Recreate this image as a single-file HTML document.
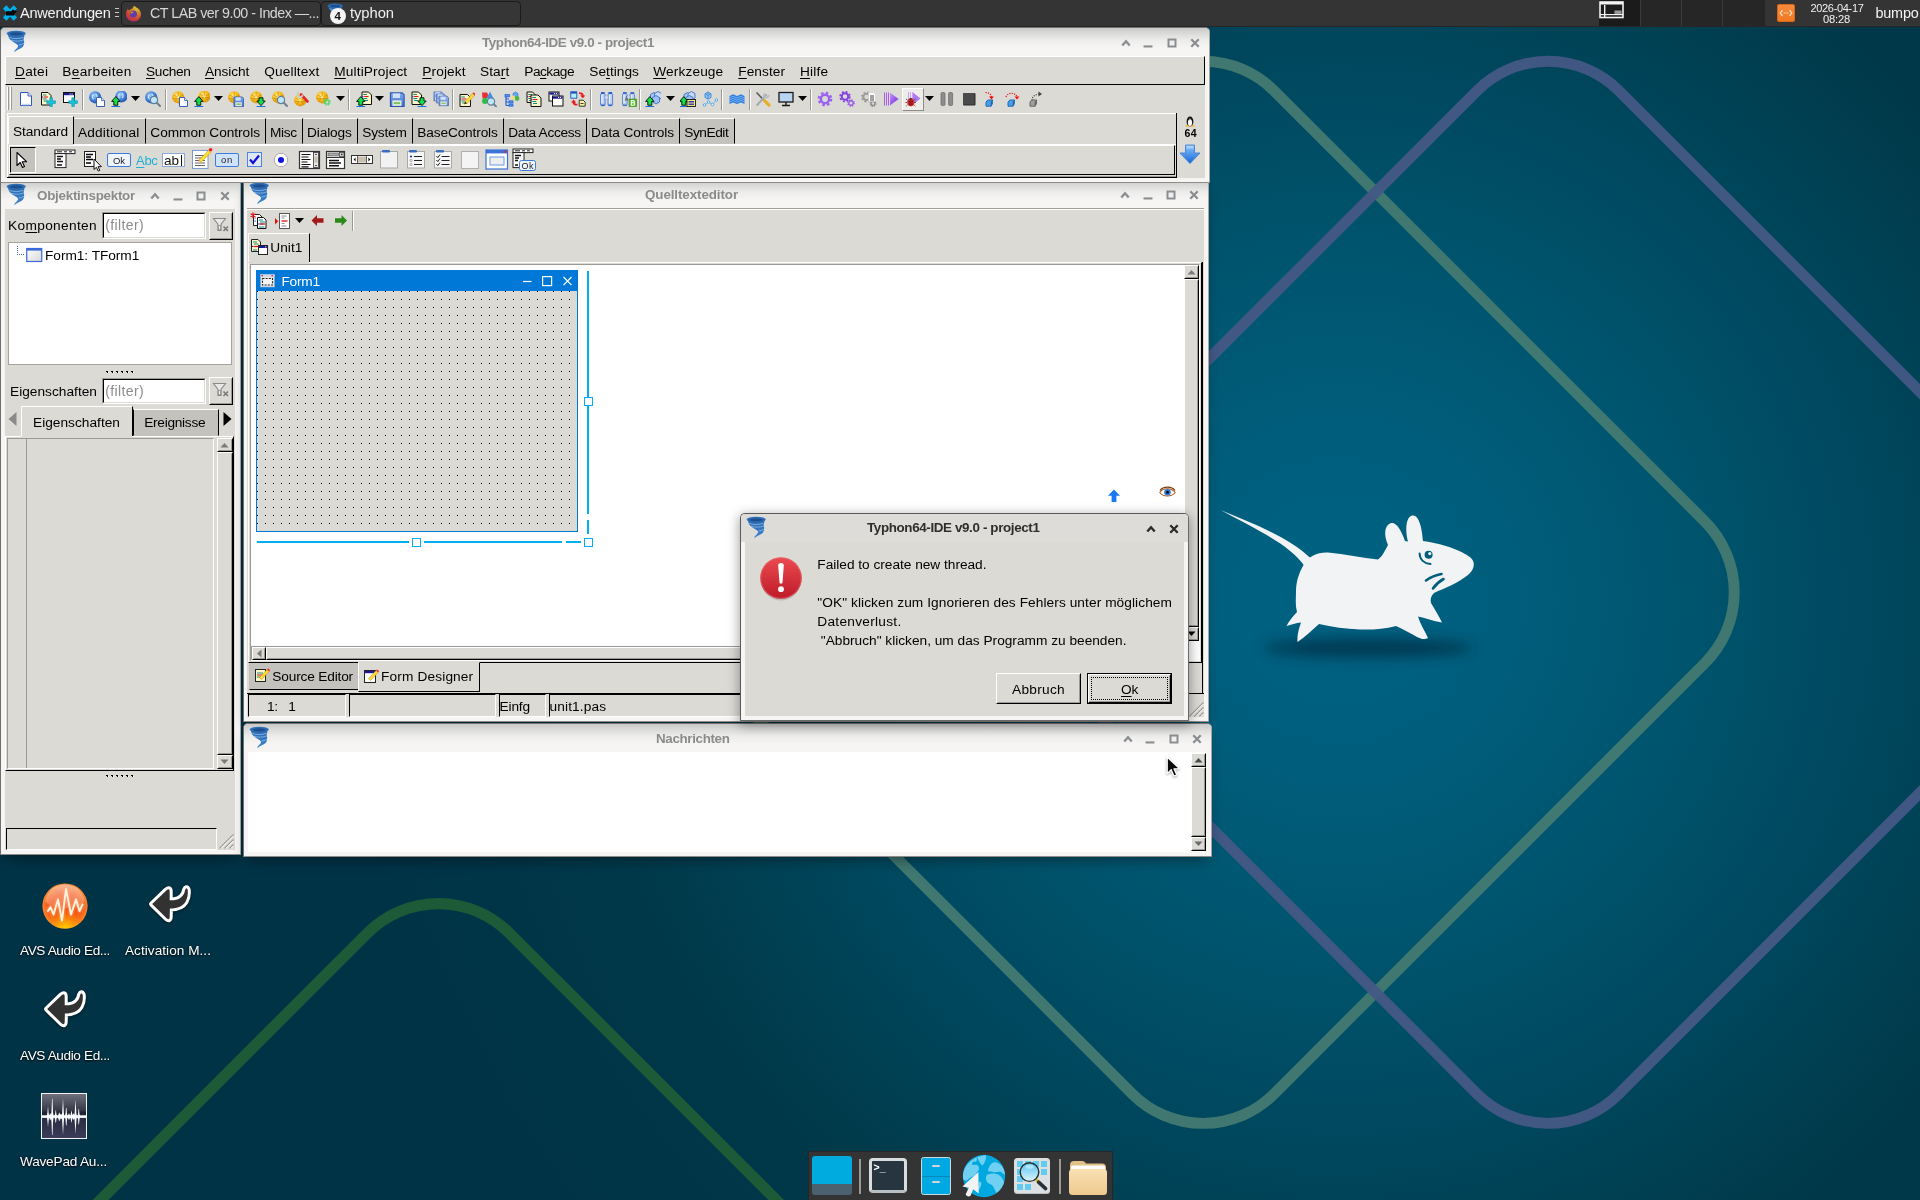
<!DOCTYPE html>
<html lang="de"><head><meta charset="utf-8"><title>Typhon64-IDE v9.0 - project1</title>
<style>
html,body{margin:0;padding:0;}
body{width:1920px;height:1200px;overflow:hidden;position:relative;background:#003f55;font-family:"Liberation Sans","DejaVu Sans",sans-serif;}
div,span.t,svg.i{position:absolute;box-sizing:border-box;}
span.t{white-space:pre;line-height:1;}
#all{left:0;top:0;width:1920px;height:1200px;will-change:transform;}
u{text-decoration:underline;text-decoration-thickness:1px;text-underline-offset:1.5px;}
</style></head>
<body>
<div id="all">
<svg width="0" height="0" style="position:absolute"><defs>
<linearGradient id="tg" x1="0" y1="0" x2="0" y2="1"><stop offset="0" stop-color="#2a69b0"/><stop offset="1" stop-color="#3f86d0"/></linearGradient>

<radialGradient id="gbl" cx="0.4" cy="0.35" r="0.75"><stop offset="0" stop-color="#a8d0ff"/><stop offset="0.45" stop-color="#4a8ade"/><stop offset="0.85" stop-color="#2258b4"/><stop offset="1" stop-color="#1a438f"/></radialGradient><radialGradient id="ggo" cx="0.4" cy="0.35" r="0.75"><stop offset="0" stop-color="#ffe878"/><stop offset="0.45" stop-color="#f8bc1c"/><stop offset="0.85" stop-color="#e09a08"/><stop offset="1" stop-color="#a86c00"/></radialGradient><linearGradient id="gpu" x1="0" y1="0" x2="1" y2="1"><stop offset="0" stop-color="#c79bff"/><stop offset="1" stop-color="#6a1fd0"/></linearGradient><linearGradient id="gfl" x1="0" y1="0" x2="0" y2="1"><stop offset="0" stop-color="#7fa8ee"/><stop offset="1" stop-color="#3f6fd0"/></linearGradient></defs></svg>
<svg class="i" style="left:0;top:0" width="1920" height="1200" viewBox="0 0 1920 1200"><defs><radialGradient id="wbg" gradientUnits="userSpaceOnUse" cx="1340" cy="600" r="1000"><stop offset="0" stop-color="#006181"/><stop offset="0.1" stop-color="#006080"/><stop offset="0.2" stop-color="#005c79"/><stop offset="0.3" stop-color="#005772"/><stop offset="0.4" stop-color="#00516a"/><stop offset="0.55" stop-color="#00475d"/><stop offset="0.65" stop-color="#004053"/><stop offset="0.75" stop-color="#00394a"/><stop offset="0.9" stop-color="#003447"/><stop offset="1" stop-color="#003346"/></radialGradient><filter id="blur6" x="-20%" y="-100%" width="140%" height="300%"><feGaussianBlur stdDeviation="7"/></filter></defs><rect width="1920" height="1200" fill="url(#wbg)"/><g fill="none"><rect x="33.6" y="1029.8" width="809.6" height="809.6" rx="100" transform="rotate(45 438.4 1434.6)" stroke="#1c5a38" stroke-width="11.2" stroke-opacity="1"/><rect x="798.4" y="187.5" width="809.6" height="809.6" rx="100" transform="rotate(45 1203.2 592.3)" stroke="#427a72" stroke-width="10.9" stroke-opacity="0.97"/><rect x="1143.2" y="187.5" width="809.6" height="809.6" rx="100" transform="rotate(45 1548 592.3)" stroke="#445885" stroke-width="10.9" stroke-opacity="0.96"/></g><ellipse cx="1368" cy="648" rx="105" ry="9" fill="#002c40" opacity="0.75" filter="url(#blur6)"/><g fill="#f2f3f5"><path d="M1220.4 510 C1255 524 1290 538 1310.5 558 L1304.5 566 C1290 545 1258 530 1220.4 510Z"/>
<path d="M1303 566 C1308 556 1318 552 1328 552.5 C1345 554 1362 558 1378 559.5 C1383 556 1385 550 1388 545 C1384 536 1384 526 1390 523.5 C1396 521 1401 530 1405 541 L1408 541.5 C1405 530 1406 517 1412 515.5 C1419 514 1422 528 1423 541 C1440 543 1462 550 1471 558 C1476 563 1474 570 1468 575 C1458 583 1445 588 1434 593 C1431 596 1430 599 1431 603 C1435 610 1439 616 1442 622.5 C1433 621 1425 618 1418 616.5 C1420 624 1425 631 1428 638 C1425 640 1421 639 1417 637 C1410 633 1403 629 1396 626 C1384 629 1372 630 1360 629.5 C1346 629 1332 627 1319 624 C1312 630 1305 637 1297.5 642 C1297 635 1299 628 1301 622.5 C1296 623 1291 625 1286.5 626 C1289 621 1293 616 1297 612 C1295 605 1296 598 1296 591.5 C1296 582 1299 573 1303 566Z"/></g>
<g fill="none" stroke="#005e7c" stroke-width="2" stroke-linecap="round"><circle cx="1428.6" cy="554.8" r="4" fill="#005e7c" stroke="none"/><circle cx="1429.8" cy="553.6" r="1.6" fill="#f2f3f5" stroke="none"/>
<path d="M1419.6 553.5 C1419.8 559.5 1424 563.5 1430.5 564"/><path d="M1426 580.5 C1431 577 1436 575 1441.5 574" stroke-width="2.6"/><path d="M1433 588.5 C1436 584 1440 581 1443.5 579" stroke-width="2.6"/></g></svg>
<div style="left:0px;top:0px;width:1920px;height:27px;background:#343434;border-bottom:1px solid #262626;"></div>
<svg class="i" style="left:2px;top:4px;" width="17" height="18" viewBox="0 0 17 18"><path d="M2.7 2.9 L13.3 15.1 M13.3 2.9 L2.7 15.1" stroke="#00b0e8" stroke-width="4.7" fill="none"/><path d="M4 7.2 L9.6 7.2 L10.2 5.8 L11.6 5.6 L12 6.6 L13.6 6.4 L14.6 7.4 L14 8.6 L12.8 9 L12.4 11.4 L4 11.4Z" fill="#050505"/></svg>
<span id="t1" class="t" style="left:20px;top:6px;font-size:14.6px;color:#f4f4f4;letter-spacing:-0.257px;">Anwendungen</span>
<div style="left:115px;top:8px;width:4px;height:1px;background:#c8c8c8;"></div>
<div style="left:115px;top:12px;width:4px;height:1px;background:#c8c8c8;"></div>
<div style="left:115px;top:16px;width:4px;height:1px;background:#c8c8c8;"></div>
<div style="left:121px;top:1px;width:200px;height:25px;background:#363636;border:1px solid #1b1b1b;border-radius:4px;"></div>
<div style="left:321px;top:1px;width:200px;height:25px;background:#363636;border:1px solid #1b1b1b;border-radius:4px;"></div>
<div style="left:125px;top:5px;width:17px;height:17px;opacity:0.8">
<svg class="i" style="left:0px;top:0px" width="17" height="17" viewBox="0 0 17 17"><defs><radialGradient id="ffg" cx="0.7" cy="0.15" r="1"><stop offset="0" stop-color="#ffe03a"/><stop offset="0.35" stop-color="#ff9a1f"/><stop offset="0.7" stop-color="#f0433a"/><stop offset="1" stop-color="#d61a78"/></radialGradient></defs><path d="M8.6 1.2 C9.8 0.4 10.4 1.8 11.4 2.6 C13.6 3.4 16 6 16 9.4 C16 13.6 12.6 16.4 8.6 16.4 C4.4 16.4 1 13.4 1 9.2 C1 7 1.8 5 3 3.8 C3.2 4.8 3.6 5.2 4.2 5.6 C5 4.4 6.4 3.8 7.4 3.8 C7.6 2.8 8 1.8 8.6 1.2Z" fill="url(#ffg)"/><circle cx="8.4" cy="9" r="3.6" fill="#6a3fc4"/><path d="M5.4 7.2 C6.6 6.2 8.2 6.6 9 7.4 C8 7.4 7.2 8 6.8 8.8 C6 8.6 5.4 8 5.4 7.2Z" fill="#ff9a1f"/></svg>
</div>
<span id="t2" class="t" style="left:150px;top:6px;font-size:14.3px;color:#d6d6d6;letter-spacing:-0.511px;">CT LAB ver 9.00 - Index —...</span>
<svg class="i" style="left:327px;top:3px" width="17.6" height="19.200000000000003" viewBox="0 0 22 24"><ellipse cx="10.2" cy="3.6" rx="9.6" ry="2.9" fill="#2d6db5"/><ellipse cx="10.2" cy="3.9" rx="6.5" ry="1.6" fill="#1d4f8f"/><path d="M2 4.5 C2.5 8 4 10 8 12.5 C11.5 14.5 13 15.5 11.5 17.5 C10.5 19 8.5 19.5 8.3 22.3 C10 20.3 13.5 19.6 16 17.6 C18.8 15.2 18.4 11.5 17.6 9 C18.2 7 18.5 5.6 18.4 4.5 C14 6.6 6.2 6.6 2 4.5Z" fill="url(#tg)"/><path d="M3.2 7.3 C7 9 13 9 17.6 7.2 M5 10.2 C9 11.6 14 11.4 17.9 10 M12.6 15 C14.5 14.8 16.6 14.2 18 13.2" stroke="#a9cdf0" stroke-width="0.8" fill="none" opacity="0.8"/></svg>
<div style="left:330px;top:8px;width:16px;height:16px;background:#f4f4f4;border-radius:8px;"></div>
<span id="t3" class="t" style="left:334.6px;top:11px;font-size:11.5px;color:#111;font-weight:bold;">4</span>
<span id="t4" class="t" style="left:350px;top:6px;font-size:14.8px;color:#f0f0f0;letter-spacing:-0.073px;">typhon</span>
<div style="left:1599px;top:0px;width:166px;height:26px;background:#262626;"></div>
<div style="left:1599px;top:0px;width:41px;height:26px;background:#1b1b1b;"></div>
<div style="left:1640px;top:0px;width:1px;height:26px;background:#3a3a3a;"></div>
<div style="left:1681px;top:0px;width:1px;height:26px;background:#3a3a3a;"></div>
<div style="left:1722px;top:0px;width:1px;height:26px;background:#3a3a3a;"></div>
<svg class="i" style="left:1599px;top:1px;" width="26" height="18" viewBox="0 0 26 18"><rect x="1" y="1" width="23" height="15.5" fill="none" stroke="#f2f2f2" stroke-width="1.6"/><rect x="1" y="1" width="23" height="2.5" fill="#f2f2f2"/><rect x="5" y="4" width="1.4" height="12" fill="#f2f2f2"/><rect x="1" y="13" width="23" height="1.2" fill="#f2f2f2"/><rect x="15.5" y="9.5" width="7" height="3.4" fill="#9a9a9a"/></svg>
<div style="left:1777px;top:4px;width:18px;height:18px;background:linear-gradient(#f58a3c,#ee7a22);border:1px solid #d9691a;border-radius:1.5px;"></div>
<svg class="i" style="left:1779px;top:9px;" width="14" height="8" viewBox="0 0 14 8"><path d="M3.5 1.2 L1.2 4 L3.5 6.8 M10.5 1.2 L12.8 4 L10.5 6.8" fill="none" stroke="#ffe4cf" stroke-width="1.2"/><path d="M4.6 4h1.2M6.4 4h1.2M8.2 4h1.2" stroke="#ffe4cf" stroke-width="1.2"/></svg>
<span id="t5" class="t" style="left:1810.5px;top:3px;font-size:11px;color:#f0f0f0;letter-spacing:-0.328px;">2026-04-17</span>
<span id="t6" class="t" style="left:1823px;top:14px;font-size:11.2px;color:#f0f0f0;letter-spacing:-0.200px;">08:28</span>
<span id="t7" class="t" style="left:1875.5px;top:6px;font-size:14.4px;color:#f4f4f4;letter-spacing:-0.203px;">bumpo</span>
<svg class="i" style="left:41px;top:882px;" width="48" height="48" viewBox="0 0 48 48"><defs><radialGradient id="avs" cx="0.5" cy="0.5" r="0.5"><stop offset="0" stop-color="#ee3a12"/><stop offset="0.6" stop-color="#f04c18"/><stop offset="0.88" stop-color="#f66a22"/><stop offset="1" stop-color="#f98a30"/></radialGradient><radialGradient id="avs2" cx="0.5" cy="1.02" r="0.52"><stop offset="0" stop-color="#ffd800"/><stop offset="0.35" stop-color="#ffb000" stop-opacity="0.8"/><stop offset="1" stop-color="#ff8000" stop-opacity="0"/></radialGradient><linearGradient id="avs3" x1="0" y1="0" x2="0" y2="1"><stop offset="0" stop-color="#ffe8d8" stop-opacity="0.6"/><stop offset="1" stop-color="#ffc8a8" stop-opacity="0.3"/></linearGradient><filter id="avsb" x="-30%" y="-30%" width="160%" height="160%"><feGaussianBlur stdDeviation="0.9"/></filter></defs><circle cx="24" cy="24" r="22.6" fill="url(#avs)"/><circle cx="24" cy="24" r="22.6" fill="url(#avs2)"/><path d="M4.2 19 C6 8 15 2.6 24 2.6 C33 2.6 42 8 43.8 19 C40 24.5 32 26 24 26 C16 26 8 24.5 4.2 19Z" fill="url(#avs3)"/><path d="M7 29 L9.5 25 L12.5 32.5 L17 17.5 L21 38.5 L25 7 L30 32.5 L35 17.5 L38.5 29 L41.5 22.5" fill="none" stroke="#ffb070" stroke-width="3.6" stroke-linejoin="round" stroke-linecap="round" opacity="0.6" filter="url(#avsb)"/><path d="M7 29 L9.5 25 L12.5 32.5 L17 17.5 L21 38.5 L25 7 L30 32.5 L35 17.5 L38.5 29 L41.5 22.5" fill="none" stroke="#fff2dc" stroke-width="1.9" stroke-linejoin="round" stroke-linecap="round"/></svg>
<span id="t8" class="t" style="left:20px;top:944px;font-size:13.6px;color:#ffffff;letter-spacing:-0.382px;text-shadow:0 1px 2px rgba(0,0,0,0.85),0 0 2px rgba(0,0,0,0.6);">AVS Audio Ed...</span>
<svg class="i" style="left:147px;top:883px;filter:drop-shadow(0 1px 1.5px rgba(0,0,0,0.5));" width="48" height="44" viewBox="0 0 48 44"><path d="M5.2 21.1 L19.6 7.2 Q22.7 4.6 22.7 8.6 L22.7 17.3 L27 17.2 C33 16.6 37.4 12.4 38 7.2 Q39.4 3.6 40.7 6.8 C41.2 11 40.6 15 38.5 18.7 C36 23 31 25.4 22.9 25.6 L22.7 33.8 Q22.7 37.8 19.6 35.2 Z" fill="#323232" stroke="#ffffff" stroke-width="6" stroke-linejoin="round" paint-order="stroke"/></svg>
<span id="t9" class="t" style="left:125px;top:944px;font-size:13.6px;color:#ffffff;letter-spacing:0.042px;text-shadow:0 1px 2px rgba(0,0,0,0.85),0 0 2px rgba(0,0,0,0.6);">Activation M...</span>
<svg class="i" style="left:42px;top:988px;filter:drop-shadow(0 1px 1.5px rgba(0,0,0,0.5));" width="48" height="44" viewBox="0 0 48 44"><path d="M5.2 21.1 L19.6 7.2 Q22.7 4.6 22.7 8.6 L22.7 17.3 L27 17.2 C33 16.6 37.4 12.4 38 7.2 Q39.4 3.6 40.7 6.8 C41.2 11 40.6 15 38.5 18.7 C36 23 31 25.4 22.9 25.6 L22.7 33.8 Q22.7 37.8 19.6 35.2 Z" fill="#323232" stroke="#ffffff" stroke-width="6" stroke-linejoin="round" paint-order="stroke"/></svg>
<span id="t10" class="t" style="left:20px;top:1049px;font-size:13.6px;color:#ffffff;letter-spacing:-0.382px;text-shadow:0 1px 2px rgba(0,0,0,0.85),0 0 2px rgba(0,0,0,0.6);">AVS Audio Ed...</span>
<svg class="i" style="left:41px;top:1093px;" width="46" height="46" viewBox="0 0 46 46"><defs><linearGradient id="wp" x1="0" y1="0" x2="0" y2="1"><stop offset="0" stop-color="#6f727d"/><stop offset="0.36" stop-color="#3a3c4a"/><stop offset="0.42" stop-color="#20222f"/><stop offset="0.55" stop-color="#2b2d42"/><stop offset="1" stop-color="#3b3d5a"/></linearGradient></defs><rect x="0.5" y="0.5" width="45" height="45" fill="url(#wp)" stroke="#f4f4f4" stroke-width="1"/><path d="M1.0 22.5 L1.5 22.5 L2.0 22.5 L2.5 22.5 L3.0 22.5 L3.5 22.5 L4.0 22.5 L4.5 22.5 L5.0 22.5 L5.5 22.5 L6.0 22.2 L6.5 18.6 L7.0 13.5 L7.5 18.6 L8.0 22.2 L8.5 22.1 L9.0 19.9 L9.5 20.4 L10.0 22.0 L10.5 18.3 L11.0 5.7 L11.5 5.7 L12.0 18.3 L12.5 22.2 L13.0 22.5 L13.5 22.5 L14.0 21.6 L14.5 17.6 L15.0 17.6 L15.5 21.6 L16.0 22.5 L16.5 22.5 L17.0 22.4 L17.5 21.4 L18.0 19.4 L18.5 19.4 L19.0 21.4 L19.5 21.6 L20.0 20.5 L20.5 21.7 L21.0 21.4 L21.5 14.0 L22.0 5.5 L22.5 14.0 L23.0 21.4 L23.5 22.5 L24.0 22.4 L24.5 20.6 L25.0 14.9 L25.5 14.9 L26.0 20.6 L26.5 22.4 L27.0 22.3 L27.5 21.3 L28.0 20.0 L28.5 21.3 L29.0 22.3 L29.5 22.2 L30.0 19.8 L30.5 17.0 L31.0 19.8 L31.5 22.1 L32.0 21.6 L32.5 20.0 L33.0 21.5 L33.5 21.5 L34.0 14.5 L34.5 6.5 L35.0 14.5 L35.5 21.5 L36.0 22.5 L36.5 22.5 L37.0 21.3 L37.5 16.0 L38.0 16.0 L38.5 21.3 L39.0 22.5 L39.5 22.5 L40.0 22.5 L40.5 22.5 L41.0 22.5 L41.5 22.5 L42.0 22.5 L42.5 22.5 L43.0 22.5 L43.5 22.5 L44.0 22.5 L44.5 22.5 L45.0 22.5 L45.0 24.7 L44.5 24.7 L44.0 24.7 L43.5 24.7 L43.0 24.7 L42.5 24.7 L42.0 24.7 L41.5 24.7 L41.0 24.7 L40.5 24.7 L40.0 24.7 L39.5 24.7 L39.0 24.8 L38.5 26.0 L38.0 31.4 L37.5 31.4 L37.0 26.0 L36.5 24.8 L36.0 24.8 L35.5 25.7 L35.0 32.9 L34.5 41.0 L34.0 32.9 L33.5 25.8 L33.0 25.7 L32.5 27.3 L32.0 25.7 L31.5 25.1 L31.0 27.5 L30.5 30.3 L30.0 27.5 L29.5 25.1 L29.0 24.9 L28.5 26.0 L28.0 27.3 L27.5 26.0 L27.0 24.9 L26.5 24.8 L26.0 26.6 L25.5 32.4 L25.0 32.4 L24.5 26.6 L24.0 24.8 L23.5 24.8 L23.0 25.8 L22.5 33.4 L22.0 42.1 L21.5 33.4 L21.0 25.8 L20.5 25.5 L20.0 26.8 L19.5 25.6 L19.0 25.9 L18.5 27.9 L18.0 27.9 L17.5 25.9 L17.0 24.9 L16.5 24.7 L16.0 24.8 L15.5 25.7 L15.0 29.7 L14.5 29.7 L14.0 25.7 L13.5 24.8 L13.0 24.7 L12.5 25.0 L12.0 29.0 L11.5 41.9 L11.0 41.9 L10.5 29.0 L10.0 25.2 L9.5 26.9 L9.0 27.3 L8.5 25.2 L8.0 25.1 L7.5 28.7 L7.0 33.9 L6.5 28.7 L6.0 25.1 L5.5 24.7 L5.0 24.7 L4.5 24.7 L4.0 24.7 L3.5 24.7 L3.0 24.7 L2.5 24.7 L2.0 24.7 L1.5 24.7 L1.0 24.7Z" fill="#fbfcff"/><rect x="1" y="22.6" width="44" height="2" fill="#fbfcff"/></svg>
<span id="t11" class="t" style="left:20px;top:1155px;font-size:13.6px;color:#ffffff;letter-spacing:-0.186px;text-shadow:0 1px 2px rgba(0,0,0,0.85),0 0 2px rgba(0,0,0,0.6);">WavePad Au...</span>
<div style="left:808px;top:1151px;width:305px;height:50px;background:#343434;border:1px solid #262626;"></div>
<div style="left:812px;top:1156px;width:40px;height:39px;background:linear-gradient(#00abe0 0,#00abe0 73%,#4b6170 73%);border-radius:3px;"></div>
<div style="left:859px;top:1159px;width:2px;height:35px;background:#9c9a98;"></div>
<div style="left:869px;top:1158px;width:38px;height:35px;background:#263540;border:3px solid #d8dde0;border-bottom-color:#b8c0c6;border-radius:4px;"></div>
<span id="t12" class="t" style="left:873.5px;top:1162px;font-size:10.5px;color:#ffffff;font-weight:bold;font-family:"Liberation Mono","DejaVu Sans Mono",monospace;">&gt;_</span>
<div style="left:921px;top:1157px;width:30px;height:38px;background:#00a9e2;border:1.5px solid #cfd8dc;border-radius:2.5px;"></div>
<div style="left:922px;top:1175.5px;width:28px;height:1.2px;background:#0086b8;"></div>
<div style="left:932px;top:1165px;width:8px;height:2px;background:#d0d6da;border-radius:1px;"></div>
<div style="left:932px;top:1181px;width:8px;height:2px;background:#d0d6da;border-radius:1px;"></div>
<svg class="i" style="left:962px;top:1154px;" width="44" height="44" viewBox="0 0 44 44"><defs><clipPath id="gcl"><circle cx="22" cy="22" r="21.2"/></clipPath></defs><circle cx="22" cy="22" r="21.2" fill="#00a8e0"/><g clip-path="url(#gcl)" fill="#6fd0f1"><path d="M14.5 3.5 C11 5 7 8 4 12 C1.5 16 0.5 20 1 25 L4 27 L8 24 L13 21 L16 17 C18 15 17 12 15 11 C13 10 11 12 10 10 C10 8 12 7 14 8 C15 6 15 5 14.5 3.5Z"/><path d="M15 3 L24 1 C24.5 5 22 11 20 11.5 C18 9 16 6 15 3Z"/><path d="M30 9 C33 7 37 9 40 12 C42 15 43 18 43 21 L39 18 C37 17 34 19 31 18 C29 17 27 18 26 17 C26 14 28 11 30 9Z"/><path d="M25 21 C28 19 33 19 37 21 C40 23 42 27 42.5 30 C41 35 38 38 35 40 C33 37 32 33 30 31 C27 30 24 28 24 25 C24 23 24 22 25 21Z"/><path d="M17 28 C19 27 20 29 19 32 C18 34 17 36 16 36 Z"/></g><path d="M16.4 17.9 L0.4 32.4 L6.8 33.8 L3.7 40.3 C4 42 6.5 43.2 8.4 42 L11.2 35.2 L16.7 39.5Z" fill="#f3f3f4"/></svg>
<div style="left:1014px;top:1158px;width:36px;height:36px;background:#dde0e3;border-radius:3.5px;border-bottom:1.5px solid #b9bec3;"></div>
<div style="left:1017px;top:1161.0px;width:6px;height:6px;background:#62ccf0;"></div>
<div style="left:1025px;top:1161.0px;width:6px;height:6px;background:#62ccf0;"></div>
<div style="left:1033px;top:1161.0px;width:6px;height:6px;background:#62ccf0;"></div>
<div style="left:1041px;top:1161.0px;width:6px;height:6px;background:#62ccf0;"></div>
<div style="left:1017px;top:1168.6px;width:6px;height:6px;background:#62ccf0;"></div>
<div style="left:1025px;top:1168.6px;width:6px;height:6px;background:#62ccf0;"></div>
<div style="left:1033px;top:1168.6px;width:6px;height:6px;background:#62ccf0;"></div>
<div style="left:1041px;top:1168.6px;width:6px;height:6px;background:#62ccf0;"></div>
<div style="left:1017px;top:1176.2px;width:6px;height:6px;background:#62ccf0;"></div>
<div style="left:1017px;top:1183.8px;width:6px;height:6px;background:#62ccf0;"></div>
<div style="left:1025px;top:1183.8px;width:6px;height:6px;background:#62ccf0;"></div>
<svg class="i" style="left:1014px;top:1158px;" width="38" height="38" viewBox="0 0 38 38"><defs><linearGradient id="lens" x1="0" y1="0" x2="0" y2="1"><stop offset="0" stop-color="#55c6f2"/><stop offset="1" stop-color="#dff4fc"/></linearGradient></defs><path d="M22.4 21.8 L25 24.6" stroke="#e8b818" stroke-width="3.4"/><path d="M24.6 24.2 L31.6 30.6" stroke="#263238" stroke-width="3.6" stroke-linecap="round"/><circle cx="15.5" cy="14.1" r="9.3" fill="url(#lens)" stroke="#263238" stroke-width="1.4"/><ellipse cx="15.5" cy="8.8" rx="4.2" ry="2" fill="#c8eefc" opacity="0.7"/></svg>
<div style="left:1059px;top:1159px;width:2px;height:35px;background:#9c9a98;"></div>
<svg class="i" style="left:1068px;top:1159px;" width="40" height="37" viewBox="0 0 40 37"><defs><linearGradient id="fo" x1="0" y1="0" x2="0" y2="1"><stop offset="0" stop-color="#f9e0b2"/><stop offset="1" stop-color="#eec98f"/></linearGradient></defs><path d="M2 6 C2 3.5 3.5 2 6 2 L14 2 C16 2 17 3 18 4.5 L34 4.5 C36.5 4.5 38 6 38 8.5 L38 14 L2 14Z" fill="#e2c08a"/><rect x="3" y="6.5" width="34" height="8" rx="1.5" fill="#fbfbfb"/><rect x="1" y="10" width="38" height="26" rx="3.5" fill="url(#fo)"/></svg>
<div style="left:0px;top:180px;width:241px;height:675px;background:#f6f5f4;border:1px solid;border-color:#757370 #aaa6a2 #8f8c89 #6e6e6e;border-radius:5px 5px 1px 1px;box-shadow:0 7px 13px -4px rgba(0,0,0,0.42);"></div>
<div style="left:1px;top:181px;width:239px;height:28px;background:linear-gradient(to bottom,#c9c9c9 0px,#dcdcdb 6px,#ececeb 12px,#f6f5f4 20px);border-radius:4px 4px 0 0;"></div>
<svg class="i" style="left:6px;top:183px" width="22.0" height="24.0" viewBox="0 0 22 24"><ellipse cx="10.2" cy="3.6" rx="9.6" ry="2.9" fill="#2d6db5"/><ellipse cx="10.2" cy="3.9" rx="6.5" ry="1.6" fill="#1d4f8f"/><path d="M2 4.5 C2.5 8 4 10 8 12.5 C11.5 14.5 13 15.5 11.5 17.5 C10.5 19 8.5 19.5 8.3 22.3 C10 20.3 13.5 19.6 16 17.6 C18.8 15.2 18.4 11.5 17.6 9 C18.2 7 18.5 5.6 18.4 4.5 C14 6.6 6.2 6.6 2 4.5Z" fill="url(#tg)"/><path d="M3.2 7.3 C7 9 13 9 17.6 7.2 M5 10.2 C9 11.6 14 11.4 17.9 10 M12.6 15 C14.5 14.8 16.6 14.2 18 13.2" stroke="#a9cdf0" stroke-width="0.8" fill="none" opacity="0.8"/></svg>
<span id="t13" class="t" style="left:37px;top:189px;font-size:13.4px;color:#8b8b8b;font-weight:bold;letter-spacing:-0.264px;">Objektinspektor</span>
<svg class="i" style="left:147px;top:187.5px" width="16" height="16" viewBox="-8 -8 16 16"><path d="M-3.7 2.6 L0 -1.7 L3.7 2.6" fill="none" stroke="#8b8e90" stroke-width="2.3"/></svg>
<svg class="i" style="left:170px;top:187.5px" width="16" height="16" viewBox="-8 -8 16 16"><rect x="-4.5" y="2.4" width="9" height="2.1" fill="#8b8e90"/></svg>
<svg class="i" style="left:193px;top:187.5px" width="16" height="16" viewBox="-8 -8 16 16"><rect x="-3.5" y="-3.5" width="7" height="7" fill="none" stroke="#8b8e90" stroke-width="2"/></svg>
<svg class="i" style="left:216.5px;top:187.5px" width="16" height="16" viewBox="-8 -8 16 16"><path d="M-3.7 -3.7 L3.7 3.7 M3.7 -3.7 L-3.7 3.7" fill="none" stroke="#8b8e90" stroke-width="2.3"/></svg>
<div style="left:5px;top:209px;width:230px;height:641px;background:#dcdad5;"></div>
<span id="t14" class="t" style="left:8px;top:219px;font-size:13.7px;color:#000;letter-spacing:0.341px;">Ko<u>m</u>ponenten</span>
<div style="left:102px;top:212px;width:104px;height:27px;background:#fff;border:1px solid;border-color:#9c9a94 #fff #fff #9c9a94;"></div>
<div style="left:103px;top:213px;width:102px;height:25px;border:1px solid;border-color:#000 #dcdad5 #dcdad5 #000;"></div>
<span id="t15" class="t" style="left:105.3px;top:218px;font-size:14px;color:#8c8c8c;letter-spacing:0.365px;">(filter)</span>
<div style="left:209px;top:212px;width:24px;height:28px;background:#dcdad5;border:1px solid;border-color:#fff #000 #000 #fff;"></div>
<div style="left:210px;top:213px;width:22px;height:26px;border:1px solid;border-color:transparent #9c9a94 #9c9a94 transparent;"></div>
<svg class="i" style="left:212px;top:217px" width="18" height="16" viewBox="0 0 18 16"><path d="M1.5 1.5h12l-4.4 5.6v6.4h-3.2v-6.4z" fill="#e8e8e8" stroke="#8a8a8a" stroke-width="1.1"/><rect x="6.4" y="8.6" width="2.2" height="4.2" fill="#f6f6f6" stroke="#8a8a8a" stroke-width="0.8"/><path d="M11.5 9.5l4.5 4.5M16 9.5l-4.5 4.5" stroke="#777" stroke-width="1.5"/></svg>
<div style="left:8px;top:242px;width:224px;height:123px;background:#fff;border:1px solid #a5a39c;"></div>
<div style="left:17px;top:246px;width:1px;height:1px;background:#4a6aa8;"></div>
<div style="left:17px;top:248px;width:1px;height:1px;background:#4a6aa8;"></div>
<div style="left:17px;top:250px;width:1px;height:1px;background:#4a6aa8;"></div>
<div style="left:17px;top:252px;width:1px;height:1px;background:#4a6aa8;"></div>
<div style="left:17px;top:254px;width:1px;height:1px;background:#4a6aa8;"></div>
<div style="left:19px;top:254px;width:1px;height:1px;background:#4a6aa8;"></div>
<div style="left:21px;top:254px;width:1px;height:1px;background:#4a6aa8;"></div>
<div style="left:23px;top:254px;width:1px;height:1px;background:#4a6aa8;"></div>
<svg class="i" style="left:26px;top:247px" width="17" height="16" viewBox="0 0 17 16"><defs><linearGradient id="fi" x1="0" y1="0" x2="1" y2="1"><stop offset="0" stop-color="#fff"/><stop offset="1" stop-color="#d8d8d8"/></linearGradient></defs><rect x="0.75" y="1.5" width="15" height="13" fill="url(#fi)" stroke="#3a6ad8" stroke-width="1.2"/><rect x="0.75" y="1.2" width="15" height="2.4" fill="#3a6ad8"/></svg>
<span id="t16" class="t" style="left:45px;top:249px;font-size:13.7px;color:#000;letter-spacing:-0.039px;">Form1: TForm1</span>
<div style="left:106px;top:371px;width:2px;height:1px;background:#000;"></div>
<div style="left:107px;top:372px;width:1px;height:1px;background:#000;"></div>
<div style="left:108px;top:372px;width:1px;height:1px;background:#fff;"></div>
<div style="left:111px;top:371px;width:2px;height:1px;background:#000;"></div>
<div style="left:112px;top:372px;width:1px;height:1px;background:#000;"></div>
<div style="left:113px;top:372px;width:1px;height:1px;background:#fff;"></div>
<div style="left:116px;top:371px;width:2px;height:1px;background:#000;"></div>
<div style="left:117px;top:372px;width:1px;height:1px;background:#000;"></div>
<div style="left:118px;top:372px;width:1px;height:1px;background:#fff;"></div>
<div style="left:121px;top:371px;width:2px;height:1px;background:#000;"></div>
<div style="left:122px;top:372px;width:1px;height:1px;background:#000;"></div>
<div style="left:123px;top:372px;width:1px;height:1px;background:#fff;"></div>
<div style="left:126px;top:371px;width:2px;height:1px;background:#000;"></div>
<div style="left:127px;top:372px;width:1px;height:1px;background:#000;"></div>
<div style="left:128px;top:372px;width:1px;height:1px;background:#fff;"></div>
<div style="left:131px;top:371px;width:2px;height:1px;background:#000;"></div>
<div style="left:132px;top:372px;width:1px;height:1px;background:#000;"></div>
<div style="left:133px;top:372px;width:1px;height:1px;background:#fff;"></div>
<span id="t17" class="t" style="left:10px;top:385px;font-size:13.7px;color:#000;letter-spacing:0.019px;">Eigenschaften</span>
<div style="left:102px;top:378px;width:104px;height:26px;background:#fff;border:1px solid;border-color:#9c9a94 #fff #fff #9c9a94;"></div>
<div style="left:103px;top:379px;width:102px;height:24px;border:1px solid;border-color:#000 #dcdad5 #dcdad5 #000;"></div>
<span id="t18" class="t" style="left:105.3px;top:384px;font-size:14px;color:#8c8c8c;letter-spacing:0.365px;">(filter)</span>
<div style="left:209px;top:377px;width:24px;height:28px;background:#dcdad5;border:1px solid;border-color:#fff #000 #000 #fff;"></div>
<div style="left:210px;top:378px;width:22px;height:26px;border:1px solid;border-color:transparent #9c9a94 #9c9a94 transparent;"></div>
<svg class="i" style="left:212px;top:382px" width="18" height="16" viewBox="0 0 18 16"><path d="M1.5 1.5h12l-4.4 5.6v6.4h-3.2v-6.4z" fill="#e8e8e8" stroke="#8a8a8a" stroke-width="1.1"/><rect x="6.4" y="8.6" width="2.2" height="4.2" fill="#f6f6f6" stroke="#8a8a8a" stroke-width="0.8"/><path d="M11.5 9.5l4.5 4.5M16 9.5l-4.5 4.5" stroke="#777" stroke-width="1.5"/></svg>
<svg class="i" style="left:8px;top:411px" width="9" height="16" viewBox="0 0 9 16"><path d="M8.5 1v14l-8-7z" fill="#8a8a8a"/></svg>
<svg class="i" style="left:223px;top:411px" width="9" height="16" viewBox="0 0 9 16"><path d="M0.5 1v14l8-7z" fill="#000"/></svg>
<div style="left:133px;top:409px;width:86px;height:27px;background:#c4c2bd;border:1px solid;border-color:#fff #000 transparent #000;"></div>
<div style="left:21px;top:406px;width:112px;height:31px;background:#dcdad5;border:1px solid;border-color:#fff #000 transparent #fff;"></div>
<span id="t19" class="t" style="left:33px;top:416px;font-size:13.7px;color:#000;letter-spacing:0.019px;">Eigenschaften</span>
<span id="t20" class="t" style="left:144.2px;top:416px;font-size:13.7px;color:#000;letter-spacing:-0.281px;">Ereignisse</span>
<div style="left:5px;top:436px;width:229px;height:335px;border:1px solid;border-color:#fff #000 #000 #fff;"></div>
<div style="left:21px;top:436px;width:111px;height:1px;background:#dcdad5;"></div>
<div style="left:7px;top:438px;width:207px;height:331px;background:#dcdad5;border:1px solid;border-color:#9c9a94 #fff #fff #9c9a94;"></div>
<div style="left:26px;top:439px;width:1px;height:329px;background:#9c9a94;"></div>
<div style="left:217px;top:438px;width:16px;height:331px;background:#c4c2bd;border:1px solid;border-color:#9c9a94 #fff #fff #9c9a94;"></div>
<div style="left:217px;top:438px;width:16px;height:14px;background:#dcdad5;border:1px solid;border-color:#fff #000 #000 #fff;"></div>
<div style="left:218px;top:439px;width:14px;height:12px;border:1px solid;border-color:transparent #9c9a94 #9c9a94 transparent;"></div>
<svg class="i" style="left:220px;top:442px" width="9" height="6" viewBox="0 0 9 6"><path d="M0.5 5.5l4-4.5 4 4.5z" fill="#7a7a7a"/></svg>
<div style="left:217px;top:755px;width:16px;height:14px;background:#dcdad5;border:1px solid;border-color:#fff #000 #000 #fff;"></div>
<div style="left:218px;top:756px;width:14px;height:12px;border:1px solid;border-color:transparent #9c9a94 #9c9a94 transparent;"></div>
<svg class="i" style="left:220px;top:759px" width="9" height="6" viewBox="0 0 9 6"><path d="M0.5 0.5l4 4.5 4-4.5z" fill="#7a7a7a"/></svg>
<div style="left:217px;top:452px;width:16px;height:303px;background:#dcdad5;border:1px solid;border-color:#fff #000 #000 #fff;"></div>
<div style="left:218px;top:453px;width:14px;height:301px;border:1px solid;border-color:transparent #9c9a94 #9c9a94 transparent;"></div>
<div style="left:233px;top:437px;width:1px;height:333px;background:#000;"></div>
<div style="left:106px;top:775px;width:2px;height:1px;background:#000;"></div>
<div style="left:107px;top:776px;width:1px;height:1px;background:#000;"></div>
<div style="left:108px;top:776px;width:1px;height:1px;background:#fff;"></div>
<div style="left:111px;top:775px;width:2px;height:1px;background:#000;"></div>
<div style="left:112px;top:776px;width:1px;height:1px;background:#000;"></div>
<div style="left:113px;top:776px;width:1px;height:1px;background:#fff;"></div>
<div style="left:116px;top:775px;width:2px;height:1px;background:#000;"></div>
<div style="left:117px;top:776px;width:1px;height:1px;background:#000;"></div>
<div style="left:118px;top:776px;width:1px;height:1px;background:#fff;"></div>
<div style="left:121px;top:775px;width:2px;height:1px;background:#000;"></div>
<div style="left:122px;top:776px;width:1px;height:1px;background:#000;"></div>
<div style="left:123px;top:776px;width:1px;height:1px;background:#fff;"></div>
<div style="left:126px;top:775px;width:2px;height:1px;background:#000;"></div>
<div style="left:127px;top:776px;width:1px;height:1px;background:#000;"></div>
<div style="left:128px;top:776px;width:1px;height:1px;background:#fff;"></div>
<div style="left:131px;top:775px;width:2px;height:1px;background:#000;"></div>
<div style="left:132px;top:776px;width:1px;height:1px;background:#000;"></div>
<div style="left:133px;top:776px;width:1px;height:1px;background:#fff;"></div>
<div style="left:6px;top:828px;width:211px;height:22px;border:1px solid;border-color:#000 #fff #fff #000;"></div>
<svg class="i" style="left:218px;top:833px" width="16" height="16" viewBox="0 0 16 16"><path d="M15.5 1.5l-14 14M15.5 6.5l-9 9M15.5 11.5l-4 4" stroke="#9c9a94" stroke-width="1.2"/><path d="M15.5 2.8l-12.7 12.7M15.5 7.8l-7.7 7.7M15.5 12.8l-2.7 2.7" stroke="#fff" stroke-width="1"/></svg>
<div style="left:243px;top:179px;width:966px;height:543px;background:#f6f5f4;border:1px solid;border-color:#757370 #aaa6a2 #8f8c89 #6e6e6e;border-radius:5px 5px 1px 1px;box-shadow:0 7px 13px -4px rgba(0,0,0,0.42);"></div>
<div style="left:244px;top:180px;width:964px;height:28px;background:linear-gradient(to bottom,#c9c9c9 0px,#dcdcdb 6px,#ececeb 12px,#f6f5f4 20px);border-radius:4px 4px 0 0;"></div>
<svg class="i" style="left:249px;top:182px" width="22.0" height="24.0" viewBox="0 0 22 24"><ellipse cx="10.2" cy="3.6" rx="9.6" ry="2.9" fill="#2d6db5"/><ellipse cx="10.2" cy="3.9" rx="6.5" ry="1.6" fill="#1d4f8f"/><path d="M2 4.5 C2.5 8 4 10 8 12.5 C11.5 14.5 13 15.5 11.5 17.5 C10.5 19 8.5 19.5 8.3 22.3 C10 20.3 13.5 19.6 16 17.6 C18.8 15.2 18.4 11.5 17.6 9 C18.2 7 18.5 5.6 18.4 4.5 C14 6.6 6.2 6.6 2 4.5Z" fill="url(#tg)"/><path d="M3.2 7.3 C7 9 13 9 17.6 7.2 M5 10.2 C9 11.6 14 11.4 17.9 10 M12.6 15 C14.5 14.8 16.6 14.2 18 13.2" stroke="#a9cdf0" stroke-width="0.8" fill="none" opacity="0.8"/></svg>
<span id="t21" class="t" style="left:645px;top:188px;font-size:13.4px;color:#8b8b8b;font-weight:bold;letter-spacing:-0.100px;">Quelltexteditor</span>
<svg class="i" style="left:1116.5px;top:186.5px" width="16" height="16" viewBox="-8 -8 16 16"><path d="M-3.7 2.6 L0 -1.7 L3.7 2.6" fill="none" stroke="#8b8e90" stroke-width="2.3"/></svg>
<svg class="i" style="left:1139.5px;top:186.5px" width="16" height="16" viewBox="-8 -8 16 16"><rect x="-4.5" y="2.4" width="9" height="2.1" fill="#8b8e90"/></svg>
<svg class="i" style="left:1162.5px;top:186.5px" width="16" height="16" viewBox="-8 -8 16 16"><rect x="-3.5" y="-3.5" width="7" height="7" fill="none" stroke="#8b8e90" stroke-width="2"/></svg>
<svg class="i" style="left:1185.5px;top:186.5px" width="16" height="16" viewBox="-8 -8 16 16"><path d="M-3.7 -3.7 L3.7 3.7 M3.7 -3.7 L-3.7 3.7" fill="none" stroke="#8b8e90" stroke-width="2.3"/></svg>
<div style="left:247px;top:208px;width:957px;height:509px;background:#dcdad5;border-top:1px solid #a39e96;"></div>
<div style="left:247px;top:209px;width:957px;height:1px;background:#fff;"></div>
<svg class="i" style="left:250px;top:212px" width="18" height="18" viewBox="0 0 18 18"><path d="M3.500 2.500h6l2.500 2.500v8.500h-8.500z" fill="#fff" stroke="#222" stroke-width="1"/><path d="M4.500 6h1.200M4.500 9h1.200" stroke="#1a1ad0" stroke-width="1"/><path d="M7.500 5.500h6l2.500 2.500v8.500h-8.500z" fill="#fff" stroke="#111" stroke-width="1"/><path d="M9 8h4M10 10h5M9 12h4.500M9 15h5.500" stroke="#128a8a" stroke-width="1"/><path d="M10 12.500h5" stroke="#e01010" stroke-width="1.200" transform="translate(0 -0.500)"/><rect x="8.200" y="11.500" width="1.200" height="1" fill="#1a1ad0"/><path d="M3 0.500v5.500M0.600 1.800l4.800 2.900M5.400 1.800l-4.800 2.900" stroke="#e81818" stroke-width="1.300"/></svg>
<svg class="i" style="left:274px;top:212px" width="18" height="18" viewBox="0 0 18 18"><path d="M1 6v6.500l3.200-3.250z" fill="#e01010"/><rect x="5.500" y="1.500" width="10" height="15" fill="#fff" stroke="#555" stroke-width="1"/><path d="M7.500 4h5M7.500 14h5" stroke="#888" stroke-width="1"/><path d="M7.500 6h3M7.500 11.500h3" stroke="#999" stroke-width="1"/><path d="M7.500 9h6" stroke="#e01010" stroke-width="1.300"/></svg>
<svg class="i" style="left:295.0px;top:218.0px" width="9" height="5" viewBox="0 0 9 5"><path d="M0 0h9l-4.5 5z" fill="#000"/></svg>
<svg class="i" style="left:310px;top:213px" width="16" height="16" viewBox="0 0 16 16"><path d="M1.500 7.500l5.500-5.500v3.200h6.500v4.600h-6.500v3.200z" fill="#a31a1a"/></svg>
<svg class="i" style="left:333px;top:213px" width="16" height="16" viewBox="0 0 16 16"><path d="M14 7.500l-5.500-5.500v3.200h-6.500v4.600h6.500v3.200z" fill="#2a8a18"/></svg>
<div style="left:352px;top:211px;width:1px;height:20px;background:#9c9a94;"></div>
<div style="left:353px;top:211px;width:1px;height:20px;background:#fff;"></div>
<div style="left:248px;top:233px;width:62px;height:30px;background:#dcdad5;border:1px solid;border-color:#fff #000 transparent #fff;"></div>
<svg class="i" style="left:251px;top:239px" width="18" height="18" viewBox="0 0 18 18"><path d="M0.500 0.500h6.500l2.500 2.500v9.500h-9z" fill="#fbf6c8" stroke="#222" stroke-width="1"/><path d="M2 3h4M3 5h4.500M2 11h4" stroke="#128a8a" stroke-width="1"/><path d="M2.500 8h5" stroke="#e01010" stroke-width="1.200" transform="translate(0 -0.500)"/><rect x="1" y="7" width="1.200" height="1" fill="#1a1ad0"/><rect x="7.500" y="6.500" width="9" height="9" fill="#fff" stroke="#222" stroke-width="1"/><rect x="8" y="7" width="8" height="2" fill="#1a1a90"/><rect x="14.200" y="7.400" width="1" height="1" fill="#fff"/></svg>
<span id="t22" class="t" style="left:270.2px;top:241px;font-size:13.7px;color:#000;letter-spacing:0.069px;">Unit1</span>
<div style="left:248px;top:262px;width:954px;height:401px;background:#dcdad5;border:1px solid;border-color:#fff #000 #000 #fff;"></div>
<div style="left:248px;top:262px;width:61px;height:1px;background:#dcdad5;"></div>
<div style="left:1202px;top:262px;width:1px;height:431px;background:#000;"></div>
<div style="left:250px;top:264px;width:950px;height:397px;background:#fff;border:1px solid;border-color:#9c9a94 #fff #fff #9c9a94;"></div>
<div style="left:1184px;top:265px;width:15px;height:376px;background:#c4c2bd;border:1px solid;border-color:#9c9a94 #fff #fff #9c9a94;"></div>
<div style="left:1184px;top:265px;width:15px;height:14px;background:#dcdad5;border:1px solid;border-color:#fff #000 #000 #fff;"></div>
<div style="left:1185px;top:266px;width:13px;height:12px;border:1px solid;border-color:transparent #9c9a94 #9c9a94 transparent;"></div>
<svg class="i" style="left:1187px;top:269px" width="9" height="6" viewBox="0 0 9 6"><path d="M0.5 5.5l4-4.5 4 4.5z" fill="#7a7a7a"/></svg>
<div style="left:1184px;top:627px;width:15px;height:14px;background:#dcdad5;border:1px solid;border-color:#fff #000 #000 #fff;"></div>
<div style="left:1185px;top:628px;width:13px;height:12px;border:1px solid;border-color:transparent #9c9a94 #9c9a94 transparent;"></div>
<svg class="i" style="left:1187px;top:631px" width="9" height="6" viewBox="0 0 9 6"><path d="M0.5 0.5l4 4.5 4-4.5z" fill="#000"/></svg>
<div style="left:1184px;top:279px;width:15px;height:348px;background:#dcdad5;border:1px solid;border-color:#fff #000 #000 #fff;"></div>
<div style="left:1185px;top:280px;width:13px;height:346px;border:1px solid;border-color:transparent #9c9a94 #9c9a94 transparent;"></div>
<div style="left:1184px;top:641px;width:16px;height:19px;background:#fff;"></div>
<div style="left:251px;top:646px;width:933px;height:14px;background:#dcdad5;border:1px solid;border-color:#9c9a94 #fff #fff #9c9a94;"></div>
<div style="left:252px;top:647px;width:14px;height:13px;background:#dcdad5;border:1px solid;border-color:#fff #000 #000 #fff;"></div>
<div style="left:253px;top:648px;width:12px;height:11px;border:1px solid;border-color:transparent #9c9a94 #9c9a94 transparent;"></div>
<svg class="i" style="left:256px;top:649px" width="6" height="9" viewBox="0 0 6 9"><path d="M5.5 0.5l-4.5 4 4.5 4z" fill="#7a7a7a"/></svg>
<div style="left:266px;top:647px;width:918px;height:13px;background:#dcdad5;border:1px solid;border-color:#fff #000 #000 #fff;"></div>
<div style="left:267px;top:648px;width:916px;height:11px;border:1px solid;border-color:transparent #9c9a94 #9c9a94 transparent;"></div>
<div style="left:256px;top:270px;width:322px;height:262px;background:#dcdad5;border:1px solid #0078d7;background-image:radial-gradient(circle at 0.5px 0.5px,#000 0.6px,transparent 0.7px);background-size:8px 8px;background-position:0px 20px;"></div>
<div style="left:256px;top:270px;width:322px;height:21px;background:#0078d7;"></div>
<svg class="i" style="left:260px;top:274px" width="16" height="14" viewBox="0 0 16 14"><rect x="0.5" y="0.5" width="14" height="12.5" fill="#e8e8e8" stroke="#8ab0e0" stroke-width="0.6"/><rect x="0.5" y="0.5" width="14" height="2.2" fill="#d0d8e8"/><rect x="2.5" y="4.5" width="10" height="6.5" fill="#f4f4f4" stroke="#222" stroke-width="1.1" stroke-dasharray="2 1.2"/><rect x="1.5" y="1" width="1.4" height="1.4" fill="#e02020"/><rect x="11.5" y="1" width="1.4" height="1.4" fill="#e02020"/></svg>
<span id="t23" class="t" style="left:281.4px;top:275px;font-size:13.7px;color:#fff;letter-spacing:-0.189px;">Form1</span>
<svg class="i" style="left:521px;top:273px" width="56" height="16" viewBox="0 0 56 16"><path d="M2 8.5h8.5" stroke="#fff" stroke-width="1.2"/><rect x="21.6" y="3.6" width="9" height="9" fill="none" stroke="#fff" stroke-width="1.2"/><path d="M42.5 4l8 8.2M50.5 4l-8 8.2" stroke="#fff" stroke-width="1.2"/></svg>
<div style="left:587px;top:271px;width:2px;height:126px;background:#00b0f0;"></div>
<div style="left:587px;top:406px;width:2px;height:108px;background:#00b0f0;"></div>
<div style="left:587px;top:520px;width:2px;height:14px;background:#00b0f0;"></div>
<div style="left:584px;top:397px;width:9px;height:9px;background:#fff;border:1px solid #00b0f0;"></div>
<div style="left:257px;top:541px;width:152px;height:2px;background:#00b0f0;"></div>
<div style="left:424px;top:541px;width:138px;height:2px;background:#00b0f0;"></div>
<div style="left:566px;top:541px;width:15px;height:2px;background:#00b0f0;"></div>
<div style="left:412px;top:538px;width:9px;height:9px;background:#fff;border:1px solid #00b0f0;"></div>
<div style="left:584px;top:538px;width:9px;height:9px;background:#fff;border:1px solid #00b0f0;"></div>
<svg class="i" style="left:1107px;top:489px" width="14" height="14" viewBox="0 0 14 14"><path d="M7 0.5l6 6.2h-3.6v6.3h-4.8v-6.3h-3.6z" fill="#1a78f0"/></svg>
<svg class="i" style="left:1159px;top:486px" width="17" height="13" viewBox="0 0 17 13"><path d="M0.8 6.5c3-5 12-5 15.4 0-3.4 4.6-12.4 4.6-15.4 0z" fill="#fff" stroke="#b05a20" stroke-width="1.1"/><circle cx="8.5" cy="6.3" r="3.3" fill="#2a7ad8"/><circle cx="8.5" cy="6.3" r="1.5" fill="#111"/><path d="M1 4.5c3-4.6 12-4.6 15 0" fill="none" stroke="#7a3a10" stroke-width="1.2"/></svg>
<div style="left:480px;top:662px;width:722px;height:1px;background:#000;"></div>
<div style="left:249px;top:663px;width:110px;height:27px;background:#c4c2bd;border:1px solid;border-color:transparent #9c9a94 #000 #c4c2bd;"></div>
<div style="left:358px;top:662px;width:122px;height:30px;background:#dcdad5;border:1px solid;border-color:transparent #000 #000 #fff;"></div>
<svg class="i" style="left:254px;top:666px" width="18" height="18" viewBox="0 0 18 18"><rect x="1.5" y="3.5" width="10" height="12" fill="#fbf6c8" stroke="#222" stroke-width="1"/><path d="M3 7h6M3 11h6" stroke="#128a8a" stroke-width="1"/><path d="M3 9h7" stroke="#e01010" stroke-width="1"/><path d="M5.5 11.5l7.6-8 2 2-7.6 8z" fill="#ffd83a" stroke="#b88a00" stroke-width="0.5"/><path d="M13 3.4l1.2-1.2 2 2-1.2 1.2z" fill="#f03030"/></svg>
<span id="t24" class="t" style="left:272.3px;top:670px;font-size:13.7px;color:#000;letter-spacing:-0.172px;">Source Editor</span>
<svg class="i" style="left:363px;top:667px" width="18" height="18" viewBox="0 0 18 18"><rect x="1.5" y="3.5" width="11" height="12" fill="#fff" stroke="#222" stroke-width="1"/><rect x="2" y="4" width="10" height="2.2" fill="#1a1a90"/><path d="M5.5 11.5l7.6-8 2 2-7.6 8z" fill="#ffd83a" stroke="#b88a00" stroke-width="0.5"/><path d="M13 3.4l1.2-1.2 2 2-1.2 1.2z" fill="#f03030"/></svg>
<span id="t25" class="t" style="left:381.1px;top:670px;font-size:13.7px;color:#000;letter-spacing:0.130px;">Form Designer</span>
<div style="left:247px;top:693px;width:957px;height:1px;background:#000;"></div>
<div style="left:248px;top:694px;width:98px;height:23px;border:1px solid;border-color:#000 #fff #fff #000;"></div>
<div style="left:349px;top:694px;width:147px;height:23px;border:1px solid;border-color:#000 #fff #fff #000;"></div>
<div style="left:499px;top:694px;width:47px;height:23px;border:1px solid;border-color:#000 #fff #fff #000;"></div>
<div style="left:549px;top:694px;width:637px;height:23px;border:1px solid;border-color:#000 #fff #fff #000;"></div>
<span id="t26" class="t" style="left:267px;top:700px;font-size:13.7px;color:#000;letter-spacing:-0.323px;">1:   1</span>
<span id="t27" class="t" style="left:499.5px;top:700px;font-size:13.7px;color:#000;letter-spacing:-0.141px;">Einfg</span>
<span id="t28" class="t" style="left:549.5px;top:700px;font-size:13.7px;color:#000;letter-spacing:0.137px;">unit1.pas</span>
<svg class="i" style="left:1188px;top:701px" width="16" height="16" viewBox="0 0 16 16"><path d="M15.5 1.5l-14 14M15.5 6.5l-9 9M15.5 11.5l-4 4" stroke="#9c9a94" stroke-width="1.2"/><path d="M15.5 2.8l-12.7 12.7M15.5 7.8l-7.7 7.7M15.5 12.8l-2.7 2.7" stroke="#fff" stroke-width="1"/></svg>
<div style="left:0px;top:27px;width:1210px;height:156px;background:#f6f5f4;border:1px solid;border-color:#757370 #aaa6a2 #8f8c89 #6e6e6e;border-radius:5px 5px 1px 1px;"></div>
<div style="left:1px;top:28px;width:1208px;height:28px;background:linear-gradient(to bottom,#c9c9c9 0px,#dcdcdb 6px,#ececeb 12px,#f6f5f4 20px);border-radius:4px 4px 0 0;"></div>
<svg class="i" style="left:6px;top:30px" width="22.0" height="24.0" viewBox="0 0 22 24"><ellipse cx="10.2" cy="3.6" rx="9.6" ry="2.9" fill="#2d6db5"/><ellipse cx="10.2" cy="3.9" rx="6.5" ry="1.6" fill="#1d4f8f"/><path d="M2 4.5 C2.5 8 4 10 8 12.5 C11.5 14.5 13 15.5 11.5 17.5 C10.5 19 8.5 19.5 8.3 22.3 C10 20.3 13.5 19.6 16 17.6 C18.8 15.2 18.4 11.5 17.6 9 C18.2 7 18.5 5.6 18.4 4.5 C14 6.6 6.2 6.6 2 4.5Z" fill="url(#tg)"/><path d="M3.2 7.3 C7 9 13 9 17.6 7.2 M5 10.2 C9 11.6 14 11.4 17.9 10 M12.6 15 C14.5 14.8 16.6 14.2 18 13.2" stroke="#a9cdf0" stroke-width="0.8" fill="none" opacity="0.8"/></svg>
<span id="t29" class="t" style="left:482px;top:36px;font-size:13.4px;color:#8b8b8b;font-weight:bold;letter-spacing:-0.386px;">Typhon64-IDE v9.0 - project1</span>
<svg class="i" style="left:1117.5px;top:34.5px" width="16" height="16" viewBox="-8 -8 16 16"><path d="M-3.7 2.6 L0 -1.7 L3.7 2.6" fill="none" stroke="#8b8e90" stroke-width="2.3"/></svg>
<svg class="i" style="left:1140px;top:34.5px" width="16" height="16" viewBox="-8 -8 16 16"><rect x="-4.5" y="2.4" width="9" height="2.1" fill="#8b8e90"/></svg>
<svg class="i" style="left:1163.5px;top:34.5px" width="16" height="16" viewBox="-8 -8 16 16"><rect x="-3.5" y="-3.5" width="7" height="7" fill="none" stroke="#8b8e90" stroke-width="2"/></svg>
<svg class="i" style="left:1186.5px;top:34.5px" width="16" height="16" viewBox="-8 -8 16 16"><path d="M-3.7 -3.7 L3.7 3.7 M3.7 -3.7 L-3.7 3.7" fill="none" stroke="#8b8e90" stroke-width="2.3"/></svg>
<div style="left:5px;top:56px;width:1200px;height:122px;background:#dcdad5;"></div>
<div style="left:5px;top:56px;width:1200px;height:29px;background:#dcdad5;border:1px solid;border-color:#fff #000 #000 #fff;"></div>
<span id="t30" class="t" style="left:15px;top:65px;font-size:13.7px;color:#000;letter-spacing:0.266px;"><u>D</u>atei</span>
<span id="t31" class="t" style="left:62.3px;top:65px;font-size:13.7px;color:#000;letter-spacing:0.317px;">B<u>e</u>arbeiten</span>
<span id="t32" class="t" style="left:146px;top:65px;font-size:13.7px;color:#000;letter-spacing:-0.290px;"><u>S</u>uchen</span>
<span id="t33" class="t" style="left:205px;top:65px;font-size:13.7px;color:#000;letter-spacing:-0.087px;"><u>A</u>nsicht</span>
<span id="t34" class="t" style="left:264.3px;top:65px;font-size:13.7px;color:#000;letter-spacing:0.109px;">Quelltext</span>
<span id="t35" class="t" style="left:334.3px;top:65px;font-size:13.7px;color:#000;letter-spacing:0.124px;"><u>M</u>ultiProject</span>
<span id="t36" class="t" style="left:422.3px;top:65px;font-size:13.7px;color:#000;letter-spacing:0.111px;"><u>P</u>rojekt</span>
<span id="t37" class="t" style="left:480px;top:65px;font-size:13.7px;color:#000;letter-spacing:0.076px;">Sta<u>r</u>t</span>
<span id="t38" class="t" style="left:524.3px;top:65px;font-size:13.7px;color:#000;letter-spacing:-0.512px;">Pa<u>c</u>kage</span>
<span id="t39" class="t" style="left:589.3px;top:65px;font-size:13.7px;color:#000;letter-spacing:0.027px;">Se<u>t</u>tings</span>
<span id="t40" class="t" style="left:653.3px;top:65px;font-size:13.7px;color:#000;letter-spacing:0.113px;"><u>W</u>erkzeuge</span>
<span id="t41" class="t" style="left:738.3px;top:65px;font-size:13.7px;color:#000;letter-spacing:0.040px;"><u>F</u>enster</span>
<span id="t42" class="t" style="left:800px;top:65px;font-size:13.7px;color:#000;letter-spacing:0.182px;"><u>H</u>ilfe</span>
<div style="left:7px;top:87px;width:1px;height:23px;background:#fff;"></div>
<div style="left:8px;top:87px;width:1px;height:23px;background:#9c9a94;"></div>
<div style="left:10px;top:87px;width:1px;height:23px;background:#fff;"></div>
<div style="left:11px;top:87px;width:1px;height:23px;background:#9c9a94;"></div>
<div style="left:902px;top:88px;width:22px;height:23px;background:#efedea;border:1px solid;border-color:#fff #8e8c86 #8e8c86 #fff;"></div>
<svg class="i" style="left:18px;top:91px" width="16" height="16" viewBox="0 0 16 16"><path d="M2.5 1.5h7.5l3.5 3.5v9.5h-11z" fill="#ffffff" stroke="#2f55c0" stroke-width="1"/><path d="M10 1.5v3.5h3.5" fill="#dfe8fa" stroke="#2f55c0" stroke-width="0.9"/><path d="M4 13.5h8" stroke="#c8d6f2" stroke-width="1.5"/></svg>
<svg class="i" style="left:40px;top:91px" width="16" height="16" viewBox="0 0 16 16"><g transform="translate(1 1)"><path d="M0.5 0.5h6.5l3 3v9.5h-9.5z" fill="#fbf6c8" stroke="#111" stroke-width="1"/><path d="M1.8 3h3.6M1.8 7h4M2.6 9h4" stroke="#128a8a" stroke-width="1"/><path d="M2.6 5h4.4" stroke="#e01010" stroke-width="1"/><rect x="0.8" y="4.6" width="1.2" height="1" fill="#1a1ad0"/></g><path d="M11 8v3h-3v2.6h3v3h2.6v-3h3v-2.6h-3v-3z" transform="translate(-1.2 -1.2)" fill="#19c4d8" stroke="#0e8fa8" stroke-width="0.6"/></svg>
<svg class="i" style="left:62px;top:91px" width="16" height="16" viewBox="0 0 16 16"><g transform="translate(1 1)"><rect x="0.5" y="0.5" width="11" height="10" fill="#ffffff" stroke="#111" stroke-width="1"/><rect x="1" y="1" width="10" height="2.2" fill="#1a1a90"/><rect x="8.6" y="1.5" width="1" height="1" fill="#fff"/><rect x="6.6" y="1.5" width="1" height="1" fill="#fff"/></g><path d="M11 8v3h-3v2.6h3v3h2.6v-3h3v-2.6h-3v-3z" transform="translate(-1.2 -1.2)" fill="#19c4d8" stroke="#0e8fa8" stroke-width="0.6"/></svg>
<svg class="i" style="left:89px;top:91px" width="16" height="16" viewBox="0 0 16 16"><circle cx="6.2" cy="6.3" r="6.1" fill="url(#gbl)"/><path d="M4.2 3.6c-1.2 1.4-1 3.6 0.4 4.6M6.6 3c1.6 1 1.8 3.4 0.4 5" stroke="#e4f0ff" stroke-width="1.1" fill="none" opacity="0.85"/><path d="M7.5 6.5h5l3 3v6h-8z" fill="#ffffff" stroke="#3a5fb8" stroke-width="1"/><path d="M12.5 6.5v3h3" fill="#dfe8fa" stroke="#3a5fb8" stroke-width="0.8"/></svg>
<svg class="i" style="left:110.5px;top:91px" width="16" height="16" viewBox="0 0 16 16"><g transform="translate(4.2 -0.8)"><circle cx="6.2" cy="6.3" r="6.1" fill="url(#gbl)"/><path d="M4.2 3.6c-1.2 1.4-1 3.6 0.4 4.6M6.6 3c1.6 1 1.8 3.4 0.4 5" stroke="#e4f0ff" stroke-width="1.1" fill="none" opacity="0.85"/></g><path d="M0.6 10.4l4.2-4.8 4.2 4.8h-2.2v3.8h-4v-3.8z" fill="#12e048" stroke="#0a0a0a" stroke-width="0.9" stroke-linejoin="round"/><rect x="0.4" y="15" width="8.8" height="1" fill="#1a6fe0"/></svg>
<svg class="i" style="left:145px;top:91px" width="16" height="16" viewBox="0 0 16 16"><circle cx="6.2" cy="6.3" r="6.1" fill="url(#gbl)"/><path d="M4.2 3.6c-1.2 1.4-1 3.6 0.4 4.6M6.6 3c1.6 1 1.8 3.4 0.4 5" stroke="#e4f0ff" stroke-width="1.1" fill="none" opacity="0.85"/><circle cx="9" cy="9" r="3.6" fill="#bfe6fb" stroke="#5f7f9a" stroke-width="1.2"/><path d="M11.8 11.8l3.2 3.2" stroke="#6f7f90" stroke-width="2" stroke-linecap="round"/></svg>
<svg class="i" style="left:172px;top:91px" width="16" height="16" viewBox="0 0 16 16"><circle cx="6.2" cy="6.3" r="6.1" fill="url(#ggo)"/><path d="M6.2 1v5M1.6 4l4.4 2.4M10.8 4l-4.4 2.4M2.6 10.4l3.6-4M9.8 10.4l-3.6-4M0.6 7.4h11" stroke="#a86800" stroke-width="0.6" fill="none" opacity="0.75"/><circle cx="6.2" cy="6.3" r="1.3" fill="#ffe890" opacity="0.9"/><path d="M7.5 6.5h5l3 3v6h-8z" fill="#ffffff" stroke="#3a5fb8" stroke-width="1"/><path d="M12.5 6.5v3h3" fill="#dfe8fa" stroke="#3a5fb8" stroke-width="0.8"/></svg>
<svg class="i" style="left:194px;top:91px" width="16" height="16" viewBox="0 0 16 16"><g transform="translate(4.2 -0.8)"><circle cx="6.2" cy="6.3" r="6.1" fill="url(#ggo)"/><path d="M6.2 1v5M1.6 4l4.4 2.4M10.8 4l-4.4 2.4M2.6 10.4l3.6-4M9.8 10.4l-3.6-4M0.6 7.4h11" stroke="#a86800" stroke-width="0.6" fill="none" opacity="0.75"/><circle cx="6.2" cy="6.3" r="1.3" fill="#ffe890" opacity="0.9"/></g><path d="M0.6 10.4l4.2-4.8 4.2 4.8h-2.2v3.8h-4v-3.8z" fill="#12e048" stroke="#0a0a0a" stroke-width="0.9" stroke-linejoin="round"/><rect x="0.4" y="15" width="8.8" height="1" fill="#1a6fe0"/></svg>
<svg class="i" style="left:228px;top:91px" width="16" height="16" viewBox="0 0 16 16"><circle cx="6.2" cy="6.3" r="6.1" fill="url(#ggo)"/><path d="M6.2 1v5M1.6 4l4.4 2.4M10.8 4l-4.4 2.4M2.6 10.4l3.6-4M9.8 10.4l-3.6-4M0.6 7.4h11" stroke="#a86800" stroke-width="0.6" fill="none" opacity="0.75"/><circle cx="6.2" cy="6.3" r="1.3" fill="#ffe890" opacity="0.9"/><g transform="translate(5.5 5.5) scale(0.92)"><path d="M0.5 0.5h9l1.5 1.5v9h-10.5z" fill="url(#gfl)" stroke="#2f55b0" stroke-width="0.9"/><rect x="2.3" y="0.9" width="5.6" height="3.6" fill="#cfe0ff"/><rect x="2" y="6.3" width="7" height="4.2" fill="#e8f0e0"/><rect x="3" y="7.6" width="5" height="1.6" fill="#7fc060"/></g></svg>
<svg class="i" style="left:250px;top:91px" width="16" height="16" viewBox="0 0 16 16"><circle cx="6.2" cy="6.3" r="6.1" fill="url(#ggo)"/><path d="M6.2 1v5M1.6 4l4.4 2.4M10.8 4l-4.4 2.4M2.6 10.4l3.6-4M9.8 10.4l-3.6-4M0.6 7.4h11" stroke="#a86800" stroke-width="0.6" fill="none" opacity="0.75"/><circle cx="6.2" cy="6.3" r="1.3" fill="#ffe890" opacity="0.9"/><path d="M6.8 10l4.2 4.6 4.2-4.6h-2.2v-3.2h-4v3.2z" fill="#12e048" stroke="#0a0a0a" stroke-width="0.9" stroke-linejoin="round"/><rect x="6.6" y="15" width="8.8" height="1" fill="#1a6fe0"/></svg>
<svg class="i" style="left:272px;top:91px" width="16" height="16" viewBox="0 0 16 16"><circle cx="6.2" cy="6.3" r="6.1" fill="url(#ggo)"/><path d="M6.2 1v5M1.6 4l4.4 2.4M10.8 4l-4.4 2.4M2.6 10.4l3.6-4M9.8 10.4l-3.6-4M0.6 7.4h11" stroke="#a86800" stroke-width="0.6" fill="none" opacity="0.75"/><circle cx="6.2" cy="6.3" r="1.3" fill="#ffe890" opacity="0.9"/><circle cx="9" cy="9" r="3.6" fill="#bfe6fb" stroke="#5f7f9a" stroke-width="1.2"/><path d="M11.8 11.8l3.2 3.2" stroke="#6f7f90" stroke-width="2" stroke-linecap="round"/></svg>
<svg class="i" style="left:294px;top:91px" width="16" height="16" viewBox="0 0 16 16"><g transform="translate(0 3)"><circle cx="6.2" cy="6.3" r="6.1" fill="url(#ggo)"/><path d="M6.2 1v5M1.6 4l4.4 2.4M10.8 4l-4.4 2.4M2.6 10.4l3.6-4M9.8 10.4l-3.6-4M0.6 7.4h11" stroke="#a86800" stroke-width="0.6" fill="none" opacity="0.75"/><circle cx="6.2" cy="6.3" r="1.3" fill="#ffe890" opacity="0.9"/></g><path d="M7 3.5l6.5 7" stroke="#e02828" stroke-width="2.6" stroke-linecap="round"/><path d="M5 1.2a2.6 2.6 0 1 0 3.6 2.6" fill="none" stroke="#c8ccd2" stroke-width="1.8"/></svg>
<svg class="i" style="left:316px;top:91px" width="16" height="16" viewBox="0 0 16 16"><circle cx="6.2" cy="6.3" r="6.1" fill="url(#ggo)"/><path d="M6.2 1v5M1.6 4l4.4 2.4M10.8 4l-4.4 2.4M2.6 10.4l3.6-4M9.8 10.4l-3.6-4M0.6 7.4h11" stroke="#a86800" stroke-width="0.6" fill="none" opacity="0.75"/><circle cx="6.2" cy="6.3" r="1.3" fill="#ffe890" opacity="0.9"/><g transform="translate(11 11)" fill="none" stroke="#4fd86a"><circle r="3.10" stroke-width="1.15" stroke-dasharray="1.260 1.171"/><circle r="2.09" stroke-width="1.30"/></g></svg>
<svg class="i" style="left:356px;top:91px" width="16" height="16" viewBox="0 0 16 16"><g transform="translate(5.5 0.5)"><path d="M0.5 0.5h6.5l3 3v9.5h-9.5z" fill="#fbf6c8" stroke="#111" stroke-width="1"/><path d="M1.8 3h3.6M1.8 7h4M2.6 9h4" stroke="#128a8a" stroke-width="1"/><path d="M2.6 5h4.4" stroke="#e01010" stroke-width="1"/><rect x="0.8" y="4.6" width="1.2" height="1" fill="#1a1ad0"/></g><path d="M0.6 10.4l4.2-4.8 4.2 4.8h-2.2v3.8h-4v-3.8z" fill="#12e048" stroke="#0a0a0a" stroke-width="0.9" stroke-linejoin="round"/><rect x="0.4" y="15" width="8.8" height="1" fill="#1a6fe0"/></svg>
<svg class="i" style="left:389px;top:91px" width="16" height="16" viewBox="0 0 16 16"><g transform="translate(0.8 1.2) scale(1.3)"><path d="M0.5 0.5h9l1.5 1.5v9h-10.5z" fill="url(#gfl)" stroke="#2f55b0" stroke-width="0.9"/><rect x="2.3" y="0.9" width="5.6" height="3.6" fill="#cfe0ff"/><rect x="2" y="6.3" width="7" height="4.2" fill="#e8f0e0"/><rect x="3" y="7.6" width="5" height="1.6" fill="#7fc060"/></g></svg>
<svg class="i" style="left:410.5px;top:91px" width="16" height="16" viewBox="0 0 16 16"><g transform="translate(0.5 0.5)"><path d="M0.5 0.5h6.5l3 3v9.5h-9.5z" fill="#fbf6c8" stroke="#111" stroke-width="1"/><path d="M1.8 3h3.6M1.8 7h4M2.6 9h4" stroke="#128a8a" stroke-width="1"/><path d="M2.6 5h4.4" stroke="#e01010" stroke-width="1"/><rect x="0.8" y="4.6" width="1.2" height="1" fill="#1a1ad0"/></g><path d="M6.8 10l4.2 4.6 4.2-4.6h-2.2v-3.2h-4v3.2z" fill="#12e048" stroke="#0a0a0a" stroke-width="0.9" stroke-linejoin="round"/><rect x="6.6" y="15" width="8.8" height="1" fill="#1a6fe0"/></svg>
<svg class="i" style="left:433px;top:91px" width="16" height="16" viewBox="0 0 16 16"><g opacity="0.8"><g transform="translate(0.5 0.5) scale(0.85)"><path d="M0.5 0.5h9l1.5 1.5v9h-10.5z" fill="url(#gfl)" stroke="#2f55b0" stroke-width="0.9"/><rect x="2.3" y="0.9" width="5.6" height="3.6" fill="#cfe0ff"/><rect x="2" y="6.3" width="7" height="4.2" fill="#e8f0e0"/><rect x="3" y="7.6" width="5" height="1.6" fill="#7fc060"/></g><g transform="translate(3 2.6) scale(0.85)"><path d="M0.5 0.5h9l1.5 1.5v9h-10.5z" fill="url(#gfl)" stroke="#2f55b0" stroke-width="0.9"/><rect x="2.3" y="0.9" width="5.6" height="3.6" fill="#cfe0ff"/><rect x="2" y="6.3" width="7" height="4.2" fill="#e8f0e0"/><rect x="3" y="7.6" width="5" height="1.6" fill="#7fc060"/></g><g transform="translate(5.6 4.8) scale(0.9)"><path d="M0.5 0.5h9l1.5 1.5v9h-10.5z" fill="url(#gfl)" stroke="#2f55b0" stroke-width="0.9"/><rect x="2.3" y="0.9" width="5.6" height="3.6" fill="#cfe0ff"/><rect x="2" y="6.3" width="7" height="4.2" fill="#e8f0e0"/><rect x="3" y="7.6" width="5" height="1.6" fill="#7fc060"/></g></g></svg>
<svg class="i" style="left:459px;top:91px" width="16" height="16" viewBox="0 0 16 16"><g transform="translate(0.5 3)"><path d="M0.5 0.5h7.5l3 3v9.0h-10.5z" fill="#fbf6c8" stroke="#111" stroke-width="1"/><path d="M1.8 3h3.6M1.8 7h4M2.6 9h4" stroke="#128a8a" stroke-width="1"/><path d="M2.6 5h4.4" stroke="#e01010" stroke-width="1"/><rect x="0.8" y="4.6" width="1.2" height="1" fill="#1a1ad0"/></g><path d="M6 10.5l7.6-8 2 2-7.6 8z" fill="#ffd83a" stroke="#b88a00" stroke-width="0.5"/><path d="M13.6 2.5l1.2-1.2 2 2-1.2 1.2z" fill="#f03030"/><path d="M6 10.5l-0.8 2.8 2.8-0.8z" fill="#3a2a1a"/></svg>
<svg class="i" style="left:481px;top:91px" width="16" height="16" viewBox="0 0 16 16"><path d="M1 1.5h5l1.5 3-2 3h-4z" fill="#e83030"/><circle cx="4" cy="10" r="3" fill="#30c040"/><path d="M9 0.5l3.5 7h-7z" fill="#4090e8"/><g transform="translate(1 1.5)"><circle cx="9" cy="9" r="3.6" fill="#bfe6fb" stroke="#5f7f9a" stroke-width="1.2"/><path d="M11.8 11.8l3.2 3.2" stroke="#6f7f90" stroke-width="2" stroke-linecap="round"/></g></svg>
<svg class="i" style="left:504px;top:91px" width="16" height="16" viewBox="0 0 16 16"><path d="M2 5v9.5M2 8h3M2 11h3M2 14.5h3" stroke="#2060d8" stroke-width="1.2" fill="none"/><rect x="1" y="3.5" width="4.5" height="2.4" fill="#5a90e8" stroke="#2060d8" stroke-width="0.7"/><rect x="5" y="9.8" width="4" height="2.2" fill="#5a90e8" stroke="#2060d8" stroke-width="0.7"/><rect x="5" y="13" width="4" height="2.2" fill="#5a90e8" stroke="#2060d8" stroke-width="0.7"/><path d="M9 2.5l2.5-1.5 2.5 1.5v3l-2.5 1.5-2.5-1.5z" fill="#6aa6f0" stroke="#2f6fd0" stroke-width="0.6"/><circle cx="13" cy="7.5" r="2.4" fill="#48b848"/><rect x="7.5" y="4.5" width="3.4" height="4.6" rx="1.4" fill="#f2da80"/></svg>
<svg class="i" style="left:526px;top:91px" width="16" height="16" viewBox="0 0 16 16"><g transform="translate(0.5 0.5)"><path d="M0.5 0.5h5.5l3 3v7.5h-8.5z" fill="#fbf6c8" stroke="#111" stroke-width="1"/><path d="M1.8 3h3.6M1.8 7h4M2.6 9h4" stroke="#128a8a" stroke-width="1"/><path d="M2.6 5h4.4" stroke="#e01010" stroke-width="1"/><rect x="0.8" y="4.6" width="1.2" height="1" fill="#1a1ad0"/></g><g transform="translate(4.5 3.5)"><path d="M0.5 0.5h7.0l3 3v8.5h-10.0z" fill="#fbf6c8" stroke="#111" stroke-width="1"/><path d="M1.8 3h3.6M1.8 7h4M2.6 9h4" stroke="#128a8a" stroke-width="1"/><path d="M2.6 5h4.4" stroke="#e01010" stroke-width="1"/><rect x="0.8" y="4.6" width="1.2" height="1" fill="#1a1ad0"/></g></svg>
<svg class="i" style="left:548px;top:91px" width="16" height="16" viewBox="0 0 16 16"><g transform="translate(0.5 0.5)"><rect x="0.5" y="0.5" width="10" height="9" fill="#ffffff" stroke="#111" stroke-width="1"/><rect x="1" y="1" width="9" height="2.2" fill="#1a1a90"/><rect x="7.6" y="1.5" width="1" height="1" fill="#fff"/><rect x="5.6" y="1.5" width="1" height="1" fill="#fff"/></g><g transform="translate(4 4.5)"><rect x="0.5" y="0.5" width="10.5" height="10" fill="#ffffff" stroke="#111" stroke-width="1"/><rect x="1" y="1" width="9.5" height="2.2" fill="#1a1a90"/><rect x="8.1" y="1.5" width="1" height="1" fill="#fff"/><rect x="6.1" y="1.5" width="1" height="1" fill="#fff"/></g></svg>
<svg class="i" style="left:570px;top:91px" width="16" height="16" viewBox="0 0 16 16"><rect x="0.8" y="0.8" width="6" height="6.4" fill="#b6f0f4" stroke="#2050c0" stroke-width="0.9"/><rect x="0.8" y="0.8" width="6" height="1.8" fill="#2050c0"/><path d="M9.2 9.2h4l2 2v4h-6z" fill="#fbf39a" stroke="#222" stroke-width="0.9"/><path d="M10.5 12.5h3" stroke="#222" stroke-width="0.9"/><path d="M9 1.2c3 0 4.6 1 4.8 3.2h1.6l-2.6 2.8-2.6-2.8h1.4c-0.2-1-1-1.4-2.6-1.4z" fill="#f01818"/><path d="M7.4 14.6c-3 0-4.6-1-4.8-3.2h-1.6l2.6-2.8 2.6 2.8h-1.4c0.2 1 1 1.4 2.6 1.4z" fill="#f01818"/></svg>
<svg class="i" style="left:598.5px;top:91px" width="16" height="16" viewBox="0 0 16 16"><g fill="#b9d0f2" stroke="#3d6fd0" stroke-width="0.8"><rect x="1.5" y="2.5" width="4.6" height="12" rx="1.2"/><rect x="9" y="2.5" width="4.6" height="12" rx="1.2"/></g><rect x="2" y="1" width="3.6" height="2" fill="#2d62d0"/><rect x="9.5" y="1" width="3.6" height="2" fill="#2d62d0"/><rect x="2" y="13.5" width="3.6" height="1.6" fill="#2d62d0"/><rect x="9.5" y="13.5" width="3.6" height="1.6" fill="#2d62d0"/><rect x="6" y="5" width="3" height="3" fill="#dfe9f8" stroke="#8aa6d8" stroke-width="0.6"/><path d="M3 4v8M10.6 4v8" stroke="#ffffff" stroke-width="1.1" opacity="0.8"/></svg>
<svg class="i" style="left:620.5px;top:91px" width="16" height="16" viewBox="0 0 16 16"><g opacity="0.9"><g fill="#b9d0f2" stroke="#3d6fd0" stroke-width="0.8"><rect x="1.5" y="2.5" width="4.6" height="12" rx="1.2"/><rect x="9" y="2.5" width="4.6" height="12" rx="1.2"/></g><rect x="2" y="1" width="3.6" height="2" fill="#2d62d0"/><rect x="9.5" y="1" width="3.6" height="2" fill="#2d62d0"/><rect x="2" y="13.5" width="3.6" height="1.6" fill="#2d62d0"/><rect x="9.5" y="13.5" width="3.6" height="1.6" fill="#2d62d0"/><rect x="6" y="5" width="3" height="3" fill="#dfe9f8" stroke="#8aa6d8" stroke-width="0.6"/><path d="M3 4v8M10.6 4v8" stroke="#ffffff" stroke-width="1.1" opacity="0.8"/></g><rect x="8" y="8" width="7.6" height="7.6" fill="#58b830" stroke="#2f8a10" stroke-width="0.6"/><path d="M10.3 9.6v4.6h2.2a1.2 1.2 0 0 0 0-2.4h-2.2 2a1.1 1.1 0 0 0 0-2.2z" fill="none" stroke="#ffffff" stroke-width="1.1"/><path d="M5.5 4.5l-2 5h4z" fill="#555" opacity="0.7"/></svg>
<svg class="i" style="left:645px;top:91px" width="16" height="16" viewBox="0 0 16 16"><g transform="translate(2.5 -0.5)"><path d="M3 4l3.5-2 3.5 2v4.5l-3.5 2-3.5-2z" fill="#a8c6f4" stroke="#2f5fc0" stroke-width="0.8"/><path d="M7 3l3.5-2 3.5 2v4.5l-3.5 2-3.5-2z" fill="#c4dafa" stroke="#2f5fc0" stroke-width="0.8"/><path d="M5 7l3.5-2 3.5 2v4.5l-3.5 2-3.5-2z" fill="#9fc0f2" stroke="#2f5fc0" stroke-width="0.8"/></g><path d="M0.6 10.4l4.2-4.8 4.2 4.8h-2.2v3.8h-4v-3.8z" fill="#12e048" stroke="#0a0a0a" stroke-width="0.9" stroke-linejoin="round"/><rect x="0.4" y="15" width="8.8" height="1" fill="#1a6fe0"/></svg>
<svg class="i" style="left:680px;top:91px" width="16" height="16" viewBox="0 0 16 16"><g transform="translate(1 -0.5)"><path d="M3 4l3.5-2 3.5 2v4.5l-3.5 2-3.5-2z" fill="#a8c6f4" stroke="#2f5fc0" stroke-width="0.8"/><path d="M7 3l3.5-2 3.5 2v4.5l-3.5 2-3.5-2z" fill="#c4dafa" stroke="#2f5fc0" stroke-width="0.8"/><path d="M5 7l3.5-2 3.5 2v4.5l-3.5 2-3.5-2z" fill="#9fc0f2" stroke="#2f5fc0" stroke-width="0.8"/></g><g transform="translate(-1 0)"><path d="M0.6 10.4l4.2-4.8 4.2 4.8h-2.2v3.8h-4v-3.8z" fill="#12e048" stroke="#0a0a0a" stroke-width="0.9" stroke-linejoin="round"/><rect x="0.4" y="15" width="8.8" height="1" fill="#1a6fe0"/></g><rect x="7" y="8.5" width="8.5" height="7" fill="#f8f060" stroke="#111" stroke-width="0.9"/><path d="M8.5 10.5h5.5M8.5 12h5.5M8.5 13.6h5.5" stroke="#1a1ad0" stroke-width="0.9"/></svg>
<svg class="i" style="left:702px;top:91px" width="16" height="16" viewBox="0 0 16 16"><path d="M3 2.8l3-1.8 3 1.8v3.6l-3 1.8-3-1.8z" fill="#8fc4f0" stroke="#2f7fd0" stroke-width="0.8"/><path d="M6 1v7M3 2.8l3 1.6 3-1.6" stroke="#2f7fd0" stroke-width="0.6" fill="none"/><path d="M2.5 14l4-3 4 2.5 4-4.5" stroke="#6ab8f0" stroke-width="0.9" fill="none"/><g fill="#e8f6ff" stroke="#3a98e0" stroke-width="0.8"><circle cx="2.5" cy="14" r="1.3"/><circle cx="6.5" cy="11" r="1.3"/><circle cx="10.5" cy="13.5" r="1.3"/><circle cx="14.5" cy="9" r="1.3"/></g></svg>
<svg class="i" style="left:729px;top:91px" width="16" height="16" viewBox="0 0 16 16"><path d="M0.5 5l3.5-1.8 4 1.8 4-1.8 3.5 1.8v8l-3.5-1.6-4 1.6-4-1.6-3.5 1.6z" fill="#2f80e0"/><path d="M0.5 7l3.5-1.6 4 1.6 4-1.6 3.5 1.6M0.5 9l3.5-1.6 4 1.6 4-1.6 3.5 1.6M0.5 11l3.5-1.6 4 1.6 4-1.6 3.5 1.6" stroke="#8fc0f8" stroke-width="0.7" fill="none"/></svg>
<svg class="i" style="left:755px;top:91px" width="16" height="16" viewBox="0 0 16 16"><path d="M2 2l11 11.5" stroke="#555" stroke-width="1.6" stroke-linecap="round"/><path d="M9.5 9.5l4.5 4.6" stroke="#e8b020" stroke-width="3" stroke-linecap="round"/><path d="M2.2 14l9-10" stroke="#a8adb4" stroke-width="2.2" stroke-linecap="round"/><path d="M10 2.2a2.4 2.4 0 1 0 3.8 1.8" fill="none" stroke="#b8bcc2" stroke-width="1.7"/><path d="M1 1l2.5 1 0.8 2z" fill="#888"/></svg>
<svg class="i" style="left:778px;top:91px" width="16" height="16" viewBox="0 0 16 16"><rect x="1" y="1.5" width="14" height="9.5" fill="#b9d4f2" stroke="#1a1a1a" stroke-width="1.3"/><path d="M8 11v3M4 14.5h8" stroke="#1a1a1a" stroke-width="1.4"/></svg>
<svg class="i" style="left:817px;top:91px" width="16" height="16" viewBox="0 0 16 16"><g transform="translate(8 8)" fill="none" stroke="#9a62f0"><circle r="6.19" stroke-width="2.30" stroke-dasharray="2.520 2.343"/><circle r="4.18" stroke-width="2.59"/></g></svg>
<svg class="i" style="left:839px;top:91px" width="16" height="16" viewBox="0 0 16 16"><g transform="translate(6 5.6)" fill="none" stroke="#8440e0"><circle r="4.82" stroke-width="1.79" stroke-dasharray="1.960 1.822"/><circle r="3.25" stroke-width="2.02"/></g><g transform="translate(12 12)" fill="none" stroke="#9458e8"><circle r="3.27" stroke-width="1.22" stroke-dasharray="1.330 1.237"/><circle r="2.20" stroke-width="1.37"/></g></svg>
<svg class="i" style="left:861px;top:91px" width="16" height="16" viewBox="0 0 16 16"><g transform="translate(5.5 6)" fill="none" stroke="#9a9a9a"><circle r="4.64" stroke-width="1.73" stroke-dasharray="1.890 1.757"/><circle r="3.13" stroke-width="1.94"/></g><g transform="translate(12 12.5)" fill="none" stroke="#8a8a8a"><circle r="2.92" stroke-width="1.09" stroke-dasharray="1.190 1.106"/><circle r="1.97" stroke-width="1.22"/></g><path d="M7.5 1.5h5l2 2v7h-7z" fill="#fbfbfb" stroke="#c8c8c8" stroke-width="0.5"/><path d="M9 5h4M9 7h4M9 9h4" stroke="#333" stroke-width="0.9"/></svg>
<svg class="i" style="left:883px;top:91px" width="16" height="16" viewBox="0 0 16 16"><path d="M1.5 1.5v13M3.5 1.5v13M5.5 1.5v13" stroke="#a050f0" stroke-width="0.9"/><path d="M7 1.5l8.5 6.5-8.5 6.5z" fill="url(#gpu)"/></svg>
<svg class="i" style="left:939px;top:91px" width="16" height="16" viewBox="0 0 16 16"><rect x="2" y="1.5" width="4" height="13" rx="1.2" fill="#8c8c8c" stroke="#6e6e6e" stroke-width="0.8"/><rect x="9.6" y="1.5" width="4" height="13" rx="1.2" fill="#8c8c8c" stroke="#6e6e6e" stroke-width="0.8"/></svg>
<svg class="i" style="left:961px;top:91px" width="16" height="16" viewBox="0 0 16 16"><rect x="2" y="2" width="12" height="12" fill="#4a4a4a"/><path d="M2.5 14h11.5v-11.5" stroke="#2a2a2a" stroke-width="1" fill="none"/></svg>
<svg class="i" style="left:983px;top:91px" width="16" height="16" viewBox="0 0 16 16"><path d="M2.5 1.5c3 0 5.5 1 6 4.5" stroke="#f01010" stroke-width="1.2" stroke-dasharray="1.2 1.2" fill="none"/><path d="M6 5.5h5l-2.5 3z" fill="#f01010"/><path d="M3 11.2l1.8-2.2h5l-1.6 2.2v4h-5.2z" fill="#4aa0e8" stroke="#1560b0" stroke-width="0.9"/><path d="M8.2 11.2l1.6-2.2v4l-1.6 2.2z" fill="#1560b0"/></svg>
<svg class="i" style="left:1005px;top:91px" width="16" height="16" viewBox="0 0 16 16"><path d="M1 6c1-4 8-5.5 11-0.5" stroke="#f01010" stroke-width="1.2" stroke-dasharray="1.2 1.2" fill="none"/><path d="M9.5 5.5h5l-2.5 3z" fill="#f01010"/><path d="M3 11.2l1.8-2.2h5l-1.6 2.2v4h-5.2z" fill="#4aa0e8" stroke="#1560b0" stroke-width="0.9"/><path d="M8.2 11.2l1.6-2.2v4l-1.6 2.2z" fill="#1560b0"/></svg>
<svg class="i" style="left:1027px;top:91px" width="16" height="16" viewBox="0 0 16 16"><path d="M5 9.5c0-4 3-6 7-6.5" stroke="#444" stroke-width="1.2" stroke-dasharray="1.2 1.2" fill="none"/><path d="M11.5 0.5l3.5 2.5-3.5 2.5z" fill="#444"/><path d="M3 11.2l1.8-2.2h5l-1.6 2.2v4h-5.2z" fill="#a0a0a0" stroke="#5a5a5a" stroke-width="0.9"/><path d="M8.2 11.2l1.6-2.2v4l-1.6 2.2z" fill="#5a5a5a"/></svg>
<svg class="i" style="left:905px;top:91px" width="16" height="16" viewBox="0 0 16 16"><path d="M3.5 1v9M5.5 1v9M7.5 1v9" stroke="#c79bff" stroke-width="0.9"/><path d="M8 1.5l7.5 6-7.5 6z" fill="#a565f0" opacity="0.85"/><ellipse cx="5.8" cy="11.4" rx="3.6" ry="3.8" fill="#e82828"/><path d="M5.8 7.6v7.6" stroke="#701010" stroke-width="0.7"/><circle cx="4.3" cy="10.6" r="0.8" fill="#222"/><circle cx="7.3" cy="10.6" r="0.8" fill="#222"/><circle cx="4.6" cy="13" r="0.7" fill="#222"/><circle cx="7" cy="13" r="0.7" fill="#222"/><path d="M3.6 8.2a2.4 1.6 0 0 1 4.4 0z" fill="#222"/><path d="M2.4 9l-1.4-1M2 11.5h-1.6M2.4 14l-1.2 1.2M9.2 9l1.4-1M9.6 11.5h1.4M9.2 14l1.2 1.2" stroke="#222" stroke-width="0.7"/></svg>
<svg class="i" style="left:130.5px;top:96.0px" width="9" height="5" viewBox="0 0 9 5"><path d="M0 0h9l-4.5 5z" fill="#000"/></svg>
<svg class="i" style="left:214.0px;top:96.0px" width="9" height="5" viewBox="0 0 9 5"><path d="M0 0h9l-4.5 5z" fill="#000"/></svg>
<svg class="i" style="left:335.5px;top:96.0px" width="9" height="5" viewBox="0 0 9 5"><path d="M0 0h9l-4.5 5z" fill="#000"/></svg>
<svg class="i" style="left:375.0px;top:96.0px" width="9" height="5" viewBox="0 0 9 5"><path d="M0 0h9l-4.5 5z" fill="#000"/></svg>
<svg class="i" style="left:665.5px;top:96.0px" width="9" height="5" viewBox="0 0 9 5"><path d="M0 0h9l-4.5 5z" fill="#000"/></svg>
<svg class="i" style="left:797.5px;top:96.0px" width="9" height="5" viewBox="0 0 9 5"><path d="M0 0h9l-4.5 5z" fill="#000"/></svg>
<svg class="i" style="left:924.5px;top:96.0px" width="9" height="5" viewBox="0 0 9 5"><path d="M0 0h9l-4.5 5z" fill="#000"/></svg>
<div style="left:82px;top:89px;width:1px;height:21px;background:#9c9a94;"></div>
<div style="left:83px;top:89px;width:1px;height:21px;background:#fff;"></div>
<div style="left:165px;top:89px;width:1px;height:21px;background:#9c9a94;"></div>
<div style="left:166px;top:89px;width:1px;height:21px;background:#fff;"></div>
<div style="left:348px;top:89px;width:1px;height:21px;background:#9c9a94;"></div>
<div style="left:349px;top:89px;width:1px;height:21px;background:#fff;"></div>
<div style="left:452px;top:89px;width:1px;height:21px;background:#9c9a94;"></div>
<div style="left:453px;top:89px;width:1px;height:21px;background:#fff;"></div>
<div style="left:590px;top:89px;width:1px;height:21px;background:#9c9a94;"></div>
<div style="left:591px;top:89px;width:1px;height:21px;background:#fff;"></div>
<div style="left:639px;top:89px;width:1px;height:21px;background:#9c9a94;"></div>
<div style="left:640px;top:89px;width:1px;height:21px;background:#fff;"></div>
<div style="left:721px;top:89px;width:1px;height:21px;background:#9c9a94;"></div>
<div style="left:722px;top:89px;width:1px;height:21px;background:#fff;"></div>
<div style="left:749px;top:89px;width:1px;height:21px;background:#9c9a94;"></div>
<div style="left:750px;top:89px;width:1px;height:21px;background:#fff;"></div>
<div style="left:810px;top:89px;width:1px;height:21px;background:#9c9a94;"></div>
<div style="left:811px;top:89px;width:1px;height:21px;background:#fff;"></div>
<div style="left:7px;top:113px;width:1170px;height:1px;background:#fff;"></div>
<div style="left:1176px;top:113px;width:1px;height:65px;background:#000;"></div>
<div style="left:7px;top:177px;width:1170px;height:1px;background:#000;"></div>
<div style="left:7px;top:176px;width:1169px;height:1px;background:#9c9a94;"></div>
<div style="left:7px;top:114px;width:1px;height:63px;background:#fff;"></div>
<div style="left:8px;top:116px;width:66px;height:29px;background:#dcdad5;border:1px solid;border-color:#fff #000 transparent #fff;"></div>
<span id="t43" class="t" style="left:13px;top:125px;font-size:13.7px;color:#000;letter-spacing:-0.070px;">Standard</span>
<div style="left:74px;top:118px;width:72px;height:26px;background:#c4c2bd;border:1px solid;border-color:#fff #000 transparent #c4c2bd;"></div>
<span id="t44" class="t" style="left:78px;top:126px;font-size:13.7px;color:#000;letter-spacing:0.138px;">Additional</span>
<div style="left:146px;top:118px;width:120px;height:26px;background:#c4c2bd;border:1px solid;border-color:#fff #000 transparent #c4c2bd;"></div>
<span id="t45" class="t" style="left:150.3px;top:126px;font-size:13.7px;color:#000;letter-spacing:-0.040px;">Common Controls</span>
<div style="left:266px;top:118px;width:37px;height:26px;background:#c4c2bd;border:1px solid;border-color:#fff #000 transparent #c4c2bd;"></div>
<span id="t46" class="t" style="left:270px;top:126px;font-size:13.7px;color:#000;letter-spacing:-0.360px;">Misc</span>
<div style="left:303px;top:118px;width:55px;height:26px;background:#c4c2bd;border:1px solid;border-color:#fff #000 transparent #c4c2bd;"></div>
<span id="t47" class="t" style="left:307px;top:126px;font-size:13.7px;color:#000;letter-spacing:-0.137px;">Dialogs</span>
<div style="left:358px;top:118px;width:55px;height:26px;background:#c4c2bd;border:1px solid;border-color:#fff #000 transparent #c4c2bd;"></div>
<span id="t48" class="t" style="left:362.3px;top:126px;font-size:13.7px;color:#000;letter-spacing:-0.207px;">System</span>
<div style="left:413px;top:118px;width:91px;height:26px;background:#c4c2bd;border:1px solid;border-color:#fff #000 transparent #c4c2bd;"></div>
<span id="t49" class="t" style="left:417.3px;top:126px;font-size:13.7px;color:#000;letter-spacing:-0.148px;">BaseControls</span>
<div style="left:504px;top:118px;width:83px;height:26px;background:#c4c2bd;border:1px solid;border-color:#fff #000 transparent #c4c2bd;"></div>
<span id="t50" class="t" style="left:508.3px;top:126px;font-size:13.7px;color:#000;letter-spacing:-0.334px;">Data Access</span>
<div style="left:587px;top:118px;width:93px;height:26px;background:#c4c2bd;border:1px solid;border-color:#fff #000 transparent #c4c2bd;"></div>
<span id="t51" class="t" style="left:591px;top:126px;font-size:13.7px;color:#000;letter-spacing:-0.053px;">Data Controls</span>
<div style="left:680px;top:118px;width:55px;height:26px;background:#c4c2bd;border:1px solid;border-color:#fff #000 transparent #c4c2bd;"></div>
<span id="t52" class="t" style="left:684.3px;top:126px;font-size:13.7px;color:#000;letter-spacing:-0.453px;">SynEdit</span>
<div style="left:8px;top:144px;width:1168px;height:1px;background:#fff;"></div>
<div style="left:8px;top:144px;width:66px;height:1px;background:#dcdad5;"></div>
<div style="left:9px;top:145px;width:1166px;height:30px;background:#dcdad5;border:1px solid;border-color:#fff #000 #000 #fff;"></div>
<div style="left:10px;top:147px;width:26px;height:26px;background:#c4c2bd;border:1px solid;border-color:#000 #fff #fff #000;"></div>
<svg class="i" style="left:14px;top:151px" width="16" height="18" viewBox="0 0 16 18"><path d="M3 1.5v13l3.2-3 2.3 5 2-0.9-2.3-4.9h4.3z" fill="#fff" stroke="#000" stroke-width="1.1" stroke-linejoin="round"/></svg>
<svg class="i" style="left:54px;top:149px" width="22" height="20" viewBox="0 0 22 20"><rect x="1" y="1" width="20" height="3.6" fill="#fff" stroke="#222" stroke-width="1"/><path d="M3 2.8h5M10 2.8h3M15 2.8h3" stroke="#222" stroke-width="1"/><rect x="1" y="4.6" width="11" height="14" fill="#fff" stroke="#222" stroke-width="1"/><path d="M3 7.5h6M3 10h4M3 12.5h6M3 16h5" stroke="#111" stroke-width="1.3"/></svg>
<svg class="i" style="left:83px;top:150px" width="22" height="22" viewBox="0 0 22 22"><rect x="1.5" y="1.5" width="11" height="15" fill="#fff" stroke="#222" stroke-width="1"/><path d="M3 4.5h7M3 7h5M3 9.500h7M3 13h5" stroke="#000" stroke-width="1.3"/><path d="M11 9v10.500l2.400-2.200 1.800 3.800 1.600-0.800-1.800-3.600h3.400z" fill="#fff" stroke="#111" stroke-width="1"/></svg>
<div style="left:107px;top:153px;width:24px;height:14px;background:#eef3fc;border:1.5px solid #3a7be0;border-radius:2px;"></div>
<span id="t53" class="t" style="left:113px;top:156px;font-size:9.5px;color:#222;letter-spacing:-0.070px;">Ok</span>
<span id="t54" class="t" style="left:136px;top:154px;font-size:13px;color:#1fb0d8;letter-spacing:-0.302px;"><u>A</u>bc</span>
<div style="left:162px;top:153px;width:23px;height:14px;background:#fff;border:1px solid #8aa8d8;"></div>
<span id="t55" class="t" style="left:164px;top:154px;font-size:13.5px;color:#111;letter-spacing:-0.016px;">ab</span>
<div style="left:180.5px;top:154.5px;width:1px;height:11px;background:#111;"></div>
<svg class="i" style="left:192px;top:147px" width="22" height="22" viewBox="0 0 22 22"><rect x="0.5" y="3.5" width="15.500" height="18" fill="#fff" stroke="#7a9ad0" stroke-width="1"/><path d="M3 8.500h10M3 11h10M3 13.500h10M3 16h10M3 18.500h10" stroke="#555" stroke-width="0.9"/><path d="M7 13l9.6-9.6 2.2 2.2-9.6 9.6z" fill="#ffdc30" stroke="#c09000" stroke-width="0.5"/><path d="M7 13l-1 3.2 3.2-1z" fill="#f0c090"/><circle cx="18.6" cy="2.8" r="1.8" fill="#f02020"/></svg>
<div style="left:215px;top:153px;width:24px;height:14px;background:#cfe4fb;border:1.5px solid #3a7be0;border-radius:2px;"></div>
<span id="t56" class="t" style="left:221px;top:155px;font-size:9.5px;color:#222;letter-spacing:0.711px;">on</span>
<div style="left:247px;top:152px;width:15px;height:15px;background:#dfe8f8;border:1.5px solid #4a86e0;"></div>
<svg class="i" style="left:248px;top:153px" width="13" height="13" viewBox="0 0 13 13"><path d="M2 6.5l3 3.5 6-7.5" fill="none" stroke="#1010d8" stroke-width="2.2"/></svg>
<svg class="i" style="left:273px;top:152px" width="16" height="16" viewBox="0 0 16 16"><circle cx="8" cy="8" r="6.8" fill="#fff" stroke="#aaa" stroke-width="1"/><circle cx="8" cy="8" r="3" fill="#1010e8"/></svg>
<svg class="i" style="left:298px;top:150px" width="24" height="20" viewBox="0 0 24 20"><rect x="1.5" y="1.5" width="20" height="17" fill="#fff" stroke="#333" stroke-width="1.2"/><path d="M3.5 4.5h9M3.5 7h7M3.5 9.5h9M3.5 12h6M3.5 14.5h9M3.5 16.8h7" stroke="#111" stroke-width="1.2"/><rect x="15.5" y="2.5" width="5" height="15" fill="#e8e6e0" stroke="#333" stroke-width="0.8"/><rect x="16.5" y="6.5" width="3" height="6" fill="#c8c0b0"/><path d="M17 5l1-1.4 1 1.4zM17 15l1 1.4 1-1.4z" fill="#111"/></svg>
<svg class="i" style="left:325px;top:150px" width="22" height="20" viewBox="0 0 22 20"><rect x="1.5" y="1.5" width="18" height="17" fill="#fff" stroke="#333" stroke-width="1.2"/><rect x="3" y="3" width="10.5" height="3" fill="#aaa" stroke="#555" stroke-width="0.6"/><rect x="14.5" y="2.5" width="4.5" height="4" fill="#ddd" stroke="#333" stroke-width="0.7"/><path d="M15.6 3.8h2.4l-1.2 1.6z" fill="#111"/><path d="M1.5 7.5h18" stroke="#333" stroke-width="1"/><path d="M4 10.5h10M4 13h12M4 15.8h10" stroke="#111" stroke-width="1.4"/></svg>
<svg class="i" style="left:351px;top:155px" width="22" height="10" viewBox="0 0 22 10"><rect x="0.5" y="0.5" width="21" height="8" fill="#fff" stroke="#333" stroke-width="1"/><rect x="7" y="1.5" width="8" height="6" fill="#c8c0b0"/><path d="M6.5 0.5v8M15.5 0.5v8" stroke="#333" stroke-width="0.8"/><path d="M4.6 2.6v3.8l-2-1.9zM17.4 2.6v3.8l2-1.9z" fill="#111"/></svg>
<svg class="i" style="left:379px;top:149px" width="20" height="20" viewBox="0 0 20 20"><rect x="1.5" y="2.5" width="17" height="16.5" fill="#f2f2f2" stroke="#a8a8a8" stroke-width="1"/><rect x="3" y="1" width="8" height="2.6" rx="1" fill="#3a6cc0"/></svg>
<svg class="i" style="left:406px;top:149px" width="20" height="20" viewBox="0 0 20 20"><rect x="1.5" y="2.5" width="17" height="16.5" fill="#f6f6f6" stroke="#a8a8a8" stroke-width="1"/><rect x="3" y="1" width="8" height="2.6" rx="1" fill="#3a6cc0"/><circle cx="5" cy="7.5" r="1.1" fill="#2030c0"/><circle cx="5" cy="11.5" r="1.1" fill="#fff" stroke="#777" stroke-width="0.6"/><circle cx="5" cy="15.5" r="1.1" fill="#fff" stroke="#777" stroke-width="0.6"/><path d="M8 7.5h8M8 11.5h8M8 15.5h8" stroke="#222" stroke-width="1"/></svg>
<svg class="i" style="left:433px;top:149px" width="20" height="20" viewBox="0 0 20 20"><rect x="1.5" y="2.5" width="17" height="16.5" fill="#f6f6f6" stroke="#a8a8a8" stroke-width="1"/><rect x="3" y="1" width="8" height="2.6" rx="1" fill="#3a6cc0"/><path d="M3.4 7l1.4 1.6 2.2-3M3.4 11l1.4 1.6 2.2-3M3.4 15l1.4 1.6 2.2-3" fill="none" stroke="#222" stroke-width="1"/><path d="M8.5 7.5h8M8.5 11.5h8M8.5 15.5h8" stroke="#222" stroke-width="1"/></svg>
<div style="left:461px;top:151px;width:18px;height:18px;background:#f4f4f4;border:1px solid #b0b0b0;"></div>
<svg class="i" style="left:485px;top:149px" width="24" height="21" viewBox="0 0 24 21"><rect x="1" y="1" width="21.5" height="19" fill="#fff" stroke="#3a72d8" stroke-width="1.2"/><rect x="1" y="1" width="21.5" height="3.4" fill="#3a72d8"/><rect x="19.5" y="1.8" width="2" height="2" fill="#f02020"/><rect x="5" y="8" width="14" height="8" fill="#eee" stroke="#6a9ae8" stroke-width="1"/></svg>
<svg class="i" style="left:512px;top:148px" width="26" height="24" viewBox="0 0 26 24"><rect x="1" y="1" width="20" height="3.6" fill="#fff" stroke="#222" stroke-width="1"/><path d="M3 2.8h5M10 2.8h3M15 2.8h3" stroke="#222" stroke-width="1"/><rect x="1" y="4.6" width="11" height="15" fill="#fff" stroke="#222" stroke-width="1"/><path d="M3 7.5h6M3 10h4M3 12.5h3M3 17h3" stroke="#111" stroke-width="1.3"/></svg>
<div style="left:519px;top:160px;width:17px;height:11px;background:#eef3fc;border:1.5px solid #3a7be0;border-radius:2.5px;"></div>
<span id="t57" class="t" style="left:521.5px;top:162px;font-size:9px;color:#222;letter-spacing:0.492px;">Ok</span>
<svg class="i" style="left:1183px;top:115px" width="14" height="12" viewBox="0 0 14 12"><ellipse cx="7" cy="6.5" rx="3.4" ry="5" fill="#111"/><ellipse cx="7" cy="7.6" rx="2.1" ry="3.4" fill="#fff"/><path d="M2.6 10.6l2.6-0.8 0.6 1.8h-3.6zM11.4 10.6l-2.6-0.8-0.6 1.8h3.6z" fill="#f0b010"/><path d="M6.2 3.4h1.6l-0.8 1z" fill="#f0b010"/></svg>
<span id="t58" class="t" style="left:1184.5px;top:128px;font-size:10.5px;color:#000;font-weight:bold;letter-spacing:0.406px;">64</span>
<svg class="i" style="left:1179px;top:144px" width="22" height="21" viewBox="0 0 22 21"><defs><linearGradient id="dar" x1="0" y1="0" x2="0" y2="1"><stop offset="0" stop-color="#8cc4ff"/><stop offset="1" stop-color="#1468d8"/></linearGradient></defs><path d="M6.5 1h9v8h5.5l-10 10.5-10-10.5h5.5z" fill="url(#dar)" stroke="#3a78d0" stroke-width="0.8" stroke-linejoin="round"/><path d="M7.5 2h7v2.5h-7z" fill="#b8dcff" opacity="0.7"/></svg>
<div style="left:243px;top:723px;width:969px;height:134px;background:#f6f5f4;border:1px solid;border-color:#757370 #aaa6a2 #8f8c89 #6e6e6e;border-radius:5px 5px 1px 1px;box-shadow:0 7px 13px -4px rgba(0,0,0,0.42);"></div>
<div style="left:244px;top:724px;width:967px;height:28px;background:linear-gradient(to bottom,#c9c9c9 0px,#dcdcdb 6px,#ececeb 12px,#f6f5f4 20px);border-radius:4px 4px 0 0;"></div>
<svg class="i" style="left:249px;top:726px" width="22.0" height="24.0" viewBox="0 0 22 24"><ellipse cx="10.2" cy="3.6" rx="9.6" ry="2.9" fill="#2d6db5"/><ellipse cx="10.2" cy="3.9" rx="6.5" ry="1.6" fill="#1d4f8f"/><path d="M2 4.5 C2.5 8 4 10 8 12.5 C11.5 14.5 13 15.5 11.5 17.5 C10.5 19 8.5 19.5 8.3 22.3 C10 20.3 13.5 19.6 16 17.6 C18.8 15.2 18.4 11.5 17.6 9 C18.2 7 18.5 5.6 18.4 4.5 C14 6.6 6.2 6.6 2 4.5Z" fill="url(#tg)"/><path d="M3.2 7.3 C7 9 13 9 17.6 7.2 M5 10.2 C9 11.6 14 11.4 17.9 10 M12.6 15 C14.5 14.8 16.6 14.2 18 13.2" stroke="#a9cdf0" stroke-width="0.8" fill="none" opacity="0.8"/></svg>
<span id="t59" class="t" style="left:656px;top:732px;font-size:13.4px;color:#8b8b8b;font-weight:bold;letter-spacing:-0.354px;">Nachrichten</span>
<svg class="i" style="left:1119.5px;top:730.5px" width="16" height="16" viewBox="-8 -8 16 16"><path d="M-3.7 2.6 L0 -1.7 L3.7 2.6" fill="none" stroke="#8b8e90" stroke-width="2.3"/></svg>
<svg class="i" style="left:1142px;top:730.5px" width="16" height="16" viewBox="-8 -8 16 16"><rect x="-4.5" y="2.4" width="9" height="2.1" fill="#8b8e90"/></svg>
<svg class="i" style="left:1165.5px;top:730.5px" width="16" height="16" viewBox="-8 -8 16 16"><rect x="-3.5" y="-3.5" width="7" height="7" fill="none" stroke="#8b8e90" stroke-width="2"/></svg>
<svg class="i" style="left:1188.5px;top:730.5px" width="16" height="16" viewBox="-8 -8 16 16"><path d="M-3.7 -3.7 L3.7 3.7 M3.7 -3.7 L-3.7 3.7" fill="none" stroke="#8b8e90" stroke-width="2.3"/></svg>
<div style="left:248px;top:752px;width:958px;height:100px;background:#fff;"></div>
<div style="left:1191px;top:753px;width:15px;height:98px;background:#c4c2bd;border:1px solid;border-color:#9c9a94 #fff #fff #9c9a94;"></div>
<div style="left:1191px;top:753px;width:15px;height:14px;background:#dcdad5;border:1px solid;border-color:#fff #000 #000 #fff;"></div>
<div style="left:1192px;top:754px;width:13px;height:12px;border:1px solid;border-color:transparent #9c9a94 #9c9a94 transparent;"></div>
<svg class="i" style="left:1194px;top:757px" width="9" height="6" viewBox="0 0 9 6"><path d="M0.5 5.5l4-4.5 4 4.5z" fill="#4a4a4a"/></svg>
<div style="left:1191px;top:837px;width:15px;height:14px;background:#dcdad5;border:1px solid;border-color:#fff #000 #000 #fff;"></div>
<div style="left:1192px;top:838px;width:13px;height:12px;border:1px solid;border-color:transparent #9c9a94 #9c9a94 transparent;"></div>
<svg class="i" style="left:1194px;top:841px" width="9" height="6" viewBox="0 0 9 6"><path d="M0.5 0.5l4 4.5 4-4.5z" fill="#6a6a6a"/></svg>
<div style="left:1191px;top:767px;width:15px;height:70px;background:#dcdad5;border:1px solid;border-color:#fff #000 #000 #fff;"></div>
<div style="left:1192px;top:768px;width:13px;height:68px;border:1px solid;border-color:transparent #9c9a94 #9c9a94 transparent;"></div>
<div style="left:740px;top:513px;width:449px;height:208px;background:#f6f5f4;border:1px solid;border-color:#5a5a5a #6a6a6a #6a6a6a #5a5a5a;border-radius:5px 5px 1px 1px;box-shadow:0 3px 12px 1px rgba(0,0,0,0.36);"></div>
<div style="left:741px;top:514px;width:447px;height:28px;background:#dedcd8;border-radius:4px 4px 0 0;"></div>
<svg class="i" style="left:746px;top:516px" width="22.0" height="24.0" viewBox="0 0 22 24"><ellipse cx="10.2" cy="3.6" rx="9.6" ry="2.9" fill="#2d6db5"/><ellipse cx="10.2" cy="3.9" rx="6.5" ry="1.6" fill="#1d4f8f"/><path d="M2 4.5 C2.5 8 4 10 8 12.5 C11.5 14.5 13 15.5 11.5 17.5 C10.5 19 8.5 19.5 8.3 22.3 C10 20.3 13.5 19.6 16 17.6 C18.8 15.2 18.4 11.5 17.6 9 C18.2 7 18.5 5.6 18.4 4.5 C14 6.6 6.2 6.6 2 4.5Z" fill="url(#tg)"/><path d="M3.2 7.3 C7 9 13 9 17.6 7.2 M5 10.2 C9 11.6 14 11.4 17.9 10 M12.6 15 C14.5 14.8 16.6 14.2 18 13.2" stroke="#a9cdf0" stroke-width="0.8" fill="none" opacity="0.8"/></svg>
<span id="t60" class="t" style="left:867px;top:521px;font-size:13.4px;color:#2e2e2e;font-weight:bold;letter-spacing:-0.368px;">Typhon64-IDE v9.0 - project1</span>
<svg class="i" style="left:1142.5px;top:520.5px" width="16" height="16" viewBox="-8 -8 16 16"><path d="M-3.7 2.6 L0 -1.7 L3.7 2.6" fill="none" stroke="#2b2b2b" stroke-width="2.3"/></svg>
<svg class="i" style="left:1165.5px;top:520.5px" width="16" height="16" viewBox="-8 -8 16 16"><path d="M-3.7 -3.7 L3.7 3.7 M3.7 -3.7 L-3.7 3.7" fill="none" stroke="#2b2b2b" stroke-width="2.3"/></svg>
<div style="left:745px;top:542px;width:439px;height:174px;background:#dcdad5;"></div>
<svg class="i" style="left:758px;top:555px" width="46" height="48" viewBox="0 0 46 48"><defs><linearGradient id="er" x1="0" y1="0" x2="0" y2="1"><stop offset="0" stop-color="#ea4b50"/><stop offset="1" stop-color="#be1a28"/></linearGradient></defs><ellipse cx="23" cy="25" rx="20" ry="20.6" fill="#8a8078" opacity="0.35"/><circle cx="23" cy="23" r="20.8" fill="url(#er)"/><circle cx="23" cy="23" r="20.2" fill="none" stroke="#f07a7c" stroke-width="0.8" opacity="0.6"/><path d="M20.2 10.5c0-3.2 5.6-3.2 5.6 0l-1.3 17c-0.2 1.6-2.8 1.6-3 0z" fill="#fff"/><circle cx="23" cy="34.2" r="2.9" fill="#fff"/></svg>
<span id="t61" class="t" style="left:817.3px;top:558px;font-size:13.7px;color:#000;letter-spacing:-0.017px;">Failed to create new thread.</span>
<span id="t62" class="t" style="left:817.3px;top:596px;font-size:13.7px;color:#000;letter-spacing:0.076px;">"OK" klicken zum Ignorieren des Fehlers unter möglichem</span>
<span id="t63" class="t" style="left:817.3px;top:615px;font-size:13.7px;color:#000;letter-spacing:0.273px;">Datenverlust.</span>
<span id="t64" class="t" style="left:820.8px;top:634px;font-size:13.7px;color:#000;letter-spacing:0.001px;">"Abbruch" klicken, um das Programm zu beenden.</span>
<div style="left:996px;top:673px;width:85px;height:31px;background:#dcdad5;border:1px solid;border-color:#fff #000 #000 #fff;"></div>
<div style="left:997px;top:674px;width:83px;height:29px;border:1px solid;border-color:transparent #9c9a94 #9c9a94 transparent;"></div>
<span id="t65" class="t" style="left:1012px;top:683px;font-size:13.7px;color:#000;letter-spacing:0.288px;">Abbruch</span>
<div style="left:1087px;top:673px;width:85px;height:31px;border:1px solid #000;"></div>
<div style="left:1088px;top:674px;width:83px;height:29px;background:#dcdad5;border:1px solid;border-color:#fff #000 #000 #fff;"></div>
<div style="left:1089px;top:675px;width:81px;height:27px;border:1px solid;border-color:transparent #9c9a94 #9c9a94 transparent;"></div>
<div style="left:1091px;top:677px;width:77px;height:23px;border:1px dotted #000;"></div>
<span id="t66" class="t" style="left:1121px;top:683px;font-size:13.7px;color:#000;letter-spacing:-0.100px;"><u>O</u>k</span>
<svg class="i" style="left:1165px;top:755px;filter:drop-shadow(0 1px 1px rgba(0,0,0,0.35));" width="16" height="24" viewBox="0 0 16 24"><path d="M2.2 2 L2.2 18.6 L6.2 14.8 L9 21.2 L11.8 20 L9 13.8 L14.4 13.6Z" fill="#0a0a0a" stroke="#ffffff" stroke-width="1.3" stroke-linejoin="round"/></svg>
</div>
</body></html>
